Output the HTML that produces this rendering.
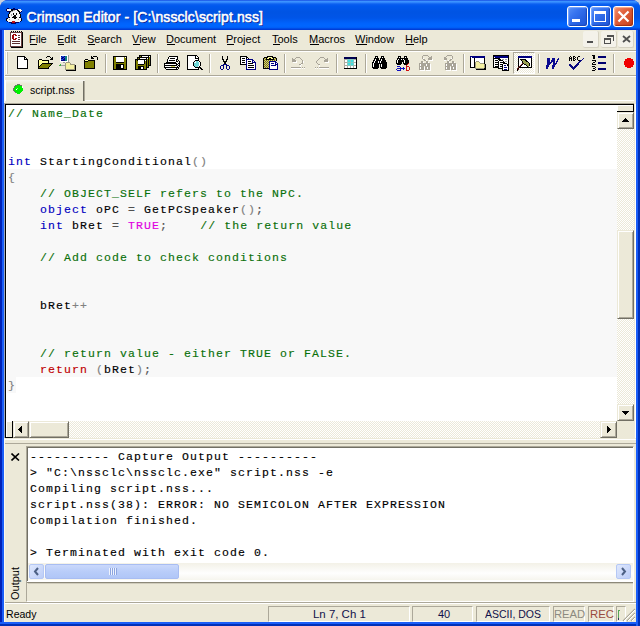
<!DOCTYPE html><html><head><meta charset="utf-8"><style>*{margin:0;padding:0;box-sizing:border-box}
html,body{width:640px;height:626px;overflow:hidden;background:#c8d0e0}
body{position:relative;font-family:"Liberation Sans",sans-serif;font-size:11px;color:#000}
.a{position:absolute}
.t{position:absolute;white-space:pre;line-height:13px;transform-origin:0 0}
.code{position:absolute;font-family:"Liberation Mono",monospace;font-size:11.5px;letter-spacing:1.1px;line-height:16px;white-space:pre;color:#000;-webkit-text-stroke:0.15px currentColor}
.kw{color:#0000c0}.cm{color:#0a700a}.mg{color:#e000e0}.rd{color:#c00000}.gy{color:#808080}.op{color:#505050}
svg{position:absolute;shape-rendering:crispEdges}
</style></head><body><div class="a" style="left:0px;top:0px;width:640px;height:626px;background:#0a3fd8;border-radius:8px 8px 0 0"></div><div class="a" style="left:0px;top:0px;width:640px;height:30px;background:linear-gradient(180deg,#0831d9 0px,#3d95ff 1px,#3a90ff 2px,#0d60f0 4px,#0058ee 6px,#0054e3 12px,#0055e8 18px,#0062fb 23px,#0066ff 26px,#005cf5 28px,#003dd7 29px,#003dd7 30px);border-radius:8px 8px 0 0"></div><div class="a" style="left:0px;top:30px;width:4px;height:596px;background:linear-gradient(90deg,#0022b8 0,#0022b8 2px,#1a5ef8 2px,#1a5ef8 4px);"></div><div class="a" style="left:636px;top:30px;width:4px;height:596px;background:linear-gradient(90deg,#1a5ef8 0,#1a5ef8 2px,#0030b8 2px,#0030b8 4px);"></div><div class="a" style="left:0px;top:622px;width:640px;height:4px;background:linear-gradient(180deg,#1a5ef8 0,#1a5ef8 2px,#0030b8 2px,#0030b8 4px);"></div><div class="a" style="left:4px;top:30px;width:632px;height:592px;background:#ece9d8;"></div><div class="t" style="left:26.5px;top:9px;font-size:14px;color:#fff;line-height:17px;-webkit-text-stroke:0.55px #fff;letter-spacing:0.1px;text-shadow:1px 1px 0 #0a1e8c;">Crimson Editor - [C:\nssclc\script.nss]</div><div class="a" style="left:4px;top:50px;width:632px;height:1px;background:#aca899;"></div><div class="a" style="left:4px;top:51px;width:632px;height:1px;background:#ffffff;"></div><div class="t" style="left:29px;top:33px;font-size:11px;color:#000;">File</div><div class="a" style="left:30px;top:44px;width:7px;height:1px;background:#000;"></div><div class="t" style="left:57px;top:33px;font-size:11px;color:#000;">Edit</div><div class="a" style="left:58px;top:44px;width:6px;height:1px;background:#000;"></div><div class="t" style="left:87px;top:33px;font-size:11px;color:#000;">Search</div><div class="a" style="left:88px;top:44px;width:7px;height:1px;background:#000;"></div><div class="t" style="left:132px;top:33px;font-size:11px;color:#000;">View</div><div class="a" style="left:133px;top:44px;width:7px;height:1px;background:#000;"></div><div class="t" style="left:166px;top:33px;font-size:11px;color:#000;">Document</div><div class="a" style="left:167px;top:44px;width:8px;height:1px;background:#000;"></div><div class="t" style="left:226px;top:33px;font-size:11px;color:#000;">Project</div><div class="a" style="left:227px;top:44px;width:7px;height:1px;background:#000;"></div><div class="t" style="left:272px;top:33px;font-size:11px;color:#000;">Tools</div><div class="a" style="left:273px;top:44px;width:7px;height:1px;background:#000;"></div><div class="t" style="left:309px;top:33px;font-size:11px;color:#000;">Macros</div><div class="a" style="left:310px;top:44px;width:9px;height:1px;background:#000;"></div><div class="t" style="left:355px;top:33px;font-size:11px;color:#000;">Window</div><div class="a" style="left:356px;top:44px;width:11px;height:1px;background:#000;"></div><div class="t" style="left:405px;top:33px;font-size:11px;color:#000;">Help</div><div class="a" style="left:406px;top:44px;width:8px;height:1px;background:#000;"></div><div class="a" style="left:583px;top:31px;width:16px;height:17px;background:#f4f2ea;border-right:1px solid #d6d2c2;border-bottom:1px solid #d6d2c2;border-radius:2px"></div><div class="a" style="left:601px;top:31px;width:16px;height:17px;background:#f4f2ea;border-right:1px solid #d6d2c2;border-bottom:1px solid #d6d2c2;border-radius:2px"></div><div class="a" style="left:618px;top:31px;width:16px;height:17px;background:#f4f2ea;border-right:1px solid #d6d2c2;border-bottom:1px solid #d6d2c2;border-radius:2px"></div><div class="a" style="left:587px;top:41px;width:6px;height:2px;background:#505050;"></div><svg style="left:604px;top:35px" width="10" height="9"><path d="M3 0h7v6h-1v-4h-6z" fill="#505050"/><path d="M0 3h7v6h-7z M1 5h5v3h-5z" fill="#505050" fill-rule="evenodd"/></svg><svg style="left:622px;top:35px" width="9" height="8"><path d="M1 1L8 7M8 1L1 7" stroke="#505050" stroke-width="1.8" fill="none" style="shape-rendering:auto"/></svg><div class="a" style="left:4px;top:75px;width:632px;height:1px;background:#aca899;"></div><div class="a" style="left:4px;top:76px;width:632px;height:1px;background:#ffffff;"></div><div class="a" style="left:6px;top:52px;width:2px;height:22px;background:#fff;border-right:1px solid #c7c3b3"></div><div class="a" style="left:105px;top:54px;width:1px;height:19px;background:#aca899;box-shadow:1px 0 0 #fff"></div><div class="a" style="left:157px;top:54px;width:1px;height:19px;background:#aca899;box-shadow:1px 0 0 #fff"></div><div class="a" style="left:209px;top:54px;width:1px;height:19px;background:#aca899;box-shadow:1px 0 0 #fff"></div><div class="a" style="left:284px;top:54px;width:1px;height:19px;background:#aca899;box-shadow:1px 0 0 #fff"></div><div class="a" style="left:336px;top:54px;width:1px;height:19px;background:#aca899;box-shadow:1px 0 0 #fff"></div><div class="a" style="left:365px;top:54px;width:1px;height:19px;background:#aca899;box-shadow:1px 0 0 #fff"></div><div class="a" style="left:463px;top:54px;width:1px;height:19px;background:#aca899;box-shadow:1px 0 0 #fff"></div><div class="a" style="left:538px;top:54px;width:1px;height:19px;background:#aca899;box-shadow:1px 0 0 #fff"></div><div class="a" style="left:613px;top:54px;width:1px;height:19px;background:#aca899;box-shadow:1px 0 0 #fff"></div><div class="a" style="left:5px;top:80px;width:80px;height:21px;background:linear-gradient(180deg,#f6f5ef,#ece9d8 4px);border-left:1px solid #fff"></div><div class="a" style="left:83px;top:81px;width:1px;height:20px;background:#716f64;"></div><div class="a" style="left:84px;top:81px;width:1px;height:20px;background:#aca899;"></div><div class="a" style="left:85px;top:100px;width:549px;height:1px;background:#fff;"></div><div class="t" style="left:30px;top:84px;font-size:11px;color:#000;transform:scaleX(0.96);">script.nss</div><div class="a" style="left:4px;top:104px;width:632px;height:334px;background:#ece9d8;"></div><div class="a" style="left:4px;top:103px;width:630px;height:335px;background:#fff;border-top:1px solid #aca899;border-left:1px solid #9aa8c0"></div><div class="a" style="left:5px;top:104px;width:629px;height:334px;background:#fff;border-top:1px solid #000;border-left:1px solid #000"></div><div class="a" style="left:7px;top:169px;width:610px;height:208px;background:#f8f8f8;"></div><div class="a" style="left:7px;top:377px;width:9px;height:16px;background:#f8f8f8;"></div><div class="code" style="left:8px;top:106px"><span class="cm">// Name_Date</span>


<span class="kw">int</span> StartingConditional<span class="gy">()</span>
<span class="gy">{</span>
    <span class="cm">// OBJECT_SELF refers to the NPC.</span>
    <span class="kw">object</span> oPC <span class="op">=</span> GetPCSpeaker<span class="gy">()</span><span class="op">;</span>
    <span class="kw">int</span> bRet <span class="op">=</span> <span class="mg">TRUE</span><span class="op">;</span>    <span class="cm">// the return value</span>

    <span class="cm">// Add code to check conditions</span>


    bRet<span class="gy">++</span>


    <span class="cm">// return value - either TRUE or FALSE.</span>
    <span class="rd">return</span> <span class="gy">(</span>bRet<span class="gy">)</span><span class="op">;</span>
<span class="gy">}</span></div><div class="a" style="left:617px;top:105px;width:17px;height:316px;background:repeating-conic-gradient(#ece9d8 0 25%, #ffffff 0 50%) 0 0/2px 2px;"></div><div class="a" style="left:617px;top:105px;width:17px;height:7px;background:#ece9d8;border-right:1px solid #000;border-bottom:1px solid #000;box-shadow:inset 1px 1px 0 #fff"></div><div class="a" style="left:617px;top:112px;width:17px;height:17px;background:#ece9d8;border-top:1px solid #ece9d8;border-left:1px solid #ece9d8;border-right:1px solid #716f64;border-bottom:1px solid #716f64;box-shadow:inset 1px 1px 0 #fff, inset -1px -1px 0 #aca899"></div><svg style="left:622px;top:118px" width="7" height="4"><path d="M3 0h1v1h1v1h1v1h1v1H0V3h1V2h1V1h1z" fill="#000"/></svg><div class="a" style="left:617px;top:230px;width:17px;height:89px;background:#ece9d8;border-top:1px solid #ece9d8;border-left:1px solid #ece9d8;border-right:1px solid #716f64;border-bottom:1px solid #716f64;box-shadow:inset 1px 1px 0 #fff, inset -1px -1px 0 #aca899"></div><div class="a" style="left:617px;top:404px;width:17px;height:17px;background:#ece9d8;border-top:1px solid #ece9d8;border-left:1px solid #ece9d8;border-right:1px solid #716f64;border-bottom:1px solid #716f64;box-shadow:inset 1px 1px 0 #fff, inset -1px -1px 0 #aca899"></div><svg style="left:622px;top:411px" width="7" height="4"><path d="M0 0h7v1h-1v1h-1v1h-1v1h-1v-1h-1v-1h-1v-1h-1z" fill="#000"/></svg><div class="a" style="left:5px;top:421px;width:612px;height:17px;background:repeating-conic-gradient(#ece9d8 0 25%, #ffffff 0 50%) 0 0/2px 2px;"></div><div class="a" style="left:5px;top:421px;width:8px;height:17px;background:#ece9d8;border-left:1px solid #000;border-right:1px solid #000;border-bottom:1px solid #000;box-shadow:inset 1px 1px 0 #fff"></div><div class="a" style="left:13px;top:421px;width:16px;height:17px;background:#ece9d8;border-top:1px solid #ece9d8;border-left:1px solid #ece9d8;border-right:1px solid #716f64;border-bottom:1px solid #716f64;box-shadow:inset 1px 1px 0 #fff, inset -1px -1px 0 #aca899"></div><svg style="left:18px;top:426px" width="4" height="7"><path d="M3 0h1v7h-1v-1h-1v-1h-1v-1h-1v-1h1v-1h1v-1h1z" fill="#000"/></svg><div class="a" style="left:29px;top:421px;width:40px;height:17px;background:#ece9d8;border-top:1px solid #ece9d8;border-left:1px solid #ece9d8;border-right:1px solid #716f64;border-bottom:1px solid #716f64;box-shadow:inset 1px 1px 0 #fff, inset -1px -1px 0 #aca899"></div><div class="a" style="left:600px;top:421px;width:17px;height:17px;background:#ece9d8;border-top:1px solid #ece9d8;border-left:1px solid #ece9d8;border-right:1px solid #716f64;border-bottom:1px solid #716f64;box-shadow:inset 1px 1px 0 #fff, inset -1px -1px 0 #aca899"></div><svg style="left:607px;top:426px" width="4" height="7"><path d="M0 0h1v1h1v1h1v1h1v1h-1v1h-1v1h-1v1h-1z" fill="#000"/></svg><div class="a" style="left:617px;top:421px;width:17px;height:17px;background:#ece9d8;"></div><div class="a" style="left:634px;top:104px;width:2px;height:334px;background:#ece9d8;border-right:1px solid #fff"></div><div class="a" style="left:4px;top:438px;width:632px;height:8px;background:#ece9d8;"></div><div class="a" style="left:4px;top:439px;width:632px;height:1px;background:#fff;"></div><div class="a" style="left:4px;top:443px;width:632px;height:1px;background:#aca899;"></div><div class="a" style="left:26px;top:446px;width:608px;height:156px;background:#ece9d8;border-top:1px solid #aca899;border-left:1px solid #aca899;border-right:1px solid #fff;border-bottom:1px solid #fff"></div><div class="a" style="left:27px;top:447px;width:606px;height:136px;background:#fff;border-top:1px solid #716f64;border-left:1px solid #716f64"></div><svg style="left:11px;top:453px" width="9" height="8"><path d="M0.5 0.5L8 7.5M8 0.5L0.5 7.5" stroke="#000" stroke-width="1.6" fill="none" style="shape-rendering:auto"/></svg><div class="t" style="left:9px;top:600px;font-size:11px;transform:rotate(-90deg);transform-origin:0 0">Output</div><div class="code" style="left:30px;top:449px">---------- Capture Output ----------
> "C:\nssclc\nssclc.exe" script.nss -e
Compiling script.nss...
script.nss(38): ERROR: NO SEMICOLON AFTER EXPRESSION
Compilation finished.

> Terminated with exit code 0.</div><div class="a" style="left:28px;top:563px;width:605px;height:17px;background:linear-gradient(180deg,#f3f1e7,#fefefe 60%,#f6f5ee);"></div><div class="a" style="left:29px;top:564px;width:15px;height:15px;background:linear-gradient(135deg,#dfe8fd,#bccdf7);border:1px solid #b5c8f5;border-radius:2px"></div><svg style="left:33px;top:567px" width="7" height="9"><path d="M5 1L2 4.5L5 8" stroke="#4d6185" stroke-width="2" fill="none" style="shape-rendering:auto"/></svg><div class="a" style="left:45px;top:564px;width:134px;height:15px;background:linear-gradient(180deg,#cad8fb,#b9cdf9 50%,#b0c6f7);border:1px solid #a8bdf2;border-radius:2px"></div><div class="a" style="left:109px;top:568px;width:1px;height:7px;background:#eef3fe;box-shadow:1px 0 0 #8ca5e0"></div><div class="a" style="left:111px;top:568px;width:1px;height:7px;background:#eef3fe;box-shadow:1px 0 0 #8ca5e0"></div><div class="a" style="left:113px;top:568px;width:1px;height:7px;background:#eef3fe;box-shadow:1px 0 0 #8ca5e0"></div><div class="a" style="left:115px;top:568px;width:1px;height:7px;background:#eef3fe;box-shadow:1px 0 0 #8ca5e0"></div><div class="a" style="left:616px;top:564px;width:15px;height:15px;background:linear-gradient(135deg,#dfe8fd,#bccdf7);border:1px solid #b5c8f5;border-radius:2px"></div><svg style="left:620px;top:567px" width="7" height="9"><path d="M2 1L5 4.5L2 8" stroke="#4d6185" stroke-width="2" fill="none" style="shape-rendering:auto"/></svg><div class="a" style="left:27px;top:581px;width:606px;height:1px;background:#fff;"></div><div class="a" style="left:27px;top:582px;width:606px;height:1px;background:#8c8878;"></div><div class="a" style="left:28px;top:583px;width:605px;height:1px;background:#d0ccbc;"></div><div class="a" style="left:4px;top:602px;width:632px;height:1px;background:#aca899;"></div><div class="a" style="left:4px;top:603px;width:632px;height:1px;background:#fff;"></div><div class="t" style="left:5.5px;top:608px;font-size:11px;color:#000;transform:scaleX(0.96);">Ready</div><div class="a" style="left:268px;top:606px;width:142px;height:16px;background:transparent;border-top:1px solid #aca899;border-left:1px solid #aca899;border-right:1px solid #fff;border-bottom:1px solid #fff"></div><div class="a" style="left:412px;top:606px;width:61px;height:16px;background:transparent;border-top:1px solid #aca899;border-left:1px solid #aca899;border-right:1px solid #fff;border-bottom:1px solid #fff"></div><div class="a" style="left:476px;top:606px;width:74px;height:16px;background:transparent;border-top:1px solid #aca899;border-left:1px solid #aca899;border-right:1px solid #fff;border-bottom:1px solid #fff"></div><div class="a" style="left:553px;top:606px;width:32px;height:16px;background:transparent;border-top:1px solid #aca899;border-left:1px solid #aca899;border-right:1px solid #fff;border-bottom:1px solid #fff"></div><div class="a" style="left:588px;top:606px;width:26px;height:16px;background:transparent;border-top:1px solid #aca899;border-left:1px solid #aca899;border-right:1px solid #fff;border-bottom:1px solid #fff"></div><div class="a" style="left:616px;top:606px;width:10px;height:16px;background:transparent;border-top:1px solid #aca899;border-left:1px solid #aca899;border-right:1px solid #fff;border-bottom:1px solid #fff"></div><div class="t" style="left:312.5px;top:608px;font-size:11px;color:#10104a;transform:scaleX(1.04);">Ln 7, Ch 1</div><div class="t" style="left:438px;top:608px;font-size:11px;color:#10104a;">40</div><div class="t" style="left:485px;top:608px;font-size:11px;color:#10104a;transform:scaleX(0.955);">ASCII, DOS</div><div class="t" style="left:554px;top:608px;font-size:11px;color:#8c8a80;transform:scaleX(1.02);">READ</div><div class="t" style="left:589.5px;top:608px;font-size:11px;color:#9a4a40;transform:scaleX(1.03);">REC</div><svg style="left:622px;top:608px" width="14" height="14"><path d="M13 1L1 13M13 5L5 13M13 9L9 13" stroke="#aca899" stroke-width="1.2" style="shape-rendering:auto"/><path d="M13 2L2 13M13 6L6 13M13 10L10 13" stroke="#fff" stroke-width="1" style="shape-rendering:auto"/></svg><svg style="left:6px;top:8px" width="16" height="16"><rect x="1" y="0" width="2" height="1" fill="#000060"/><rect x="7" y="0" width="2" height="1" fill="#000060"/><rect x="0" y="1" width="1" height="1" fill="#000060"/><rect x="1" y="1" width="4" height="1" fill="#f4f4f4"/><rect x="5" y="1" width="2" height="1" fill="#000000"/><rect x="7" y="1" width="5" height="1" fill="#000060"/><rect x="12" y="1" width="3" height="1" fill="#f4f4f4"/><rect x="0" y="2" width="1" height="1" fill="#000060"/><rect x="1" y="2" width="4" height="1" fill="#f4f4f4"/><rect x="5" y="2" width="2" height="1" fill="#000000"/><rect x="7" y="2" width="2" height="1" fill="#a0a0a0"/><rect x="9" y="2" width="2" height="1" fill="#f4f4f4"/><rect x="11" y="2" width="2" height="1" fill="#000000"/><rect x="13" y="2" width="3" height="1" fill="#f4f4f4"/><rect x="1" y="3" width="3" height="1" fill="#000060"/><rect x="4" y="3" width="1" height="1" fill="#000000"/><rect x="5" y="3" width="2" height="1" fill="#a0a0a0"/><rect x="7" y="3" width="5" height="1" fill="#f4f4f4"/><rect x="12" y="3" width="2" height="1" fill="#000000"/><rect x="14" y="3" width="1" height="1" fill="#f4f4f4"/><rect x="15" y="3" width="1" height="1" fill="#000060"/><rect x="3" y="4" width="1" height="1" fill="#000000"/><rect x="4" y="4" width="1" height="1" fill="#a0a0a0"/><rect x="5" y="4" width="8" height="1" fill="#f4f4f4"/><rect x="13" y="4" width="1" height="1" fill="#000000"/><rect x="14" y="4" width="1" height="1" fill="#000060"/><rect x="3" y="5" width="1" height="1" fill="#000000"/><rect x="4" y="5" width="3" height="1" fill="#f4f4f4"/><rect x="7" y="5" width="1" height="1" fill="#000000"/><rect x="8" y="5" width="2" height="1" fill="#f4f4f4"/><rect x="10" y="5" width="1" height="1" fill="#000000"/><rect x="11" y="5" width="2" height="1" fill="#f4f4f4"/><rect x="13" y="5" width="1" height="1" fill="#000000"/><rect x="2" y="6" width="1" height="1" fill="#000000"/><rect x="3" y="6" width="2" height="1" fill="#f4f4f4"/><rect x="5" y="6" width="1" height="1" fill="#a0a0a0"/><rect x="6" y="6" width="1" height="1" fill="#f4f4f4"/><rect x="7" y="6" width="1" height="1" fill="#000000"/><rect x="8" y="6" width="2" height="1" fill="#f4f4f4"/><rect x="10" y="6" width="1" height="1" fill="#000000"/><rect x="11" y="6" width="3" height="1" fill="#f4f4f4"/><rect x="14" y="6" width="1" height="1" fill="#000000"/><rect x="2" y="7" width="1" height="1" fill="#000000"/><rect x="3" y="7" width="2" height="1" fill="#f4f4f4"/><rect x="5" y="7" width="1" height="1" fill="#a0a0a0"/><rect x="6" y="7" width="2" height="1" fill="#f4f4f4"/><rect x="8" y="7" width="2" height="1" fill="#000000"/><rect x="10" y="7" width="4" height="1" fill="#f4f4f4"/><rect x="14" y="7" width="1" height="1" fill="#000000"/><rect x="2" y="8" width="1" height="1" fill="#000000"/><rect x="3" y="8" width="4" height="1" fill="#f4f4f4"/><rect x="7" y="8" width="3" height="1" fill="#000000"/><rect x="10" y="8" width="4" height="1" fill="#f4f4f4"/><rect x="14" y="8" width="1" height="1" fill="#000000"/><rect x="2" y="9" width="1" height="1" fill="#000060"/><rect x="3" y="9" width="1" height="1" fill="#000000"/><rect x="4" y="9" width="2" height="1" fill="#f4f4f4"/><rect x="6" y="9" width="5" height="1" fill="#000000"/><rect x="11" y="9" width="2" height="1" fill="#f4f4f4"/><rect x="13" y="9" width="2" height="1" fill="#000000"/><rect x="0" y="10" width="1" height="1" fill="#000060"/><rect x="1" y="10" width="1" height="1" fill="#000000"/><rect x="2" y="10" width="6" height="1" fill="#f4f4f4"/><rect x="8" y="10" width="2" height="1" fill="#000000"/><rect x="10" y="10" width="5" height="1" fill="#f4f4f4"/><rect x="15" y="10" width="1" height="1" fill="#000060"/><rect x="0" y="11" width="1" height="1" fill="#000000"/><rect x="1" y="11" width="2" height="1" fill="#f4f4f4"/><rect x="3" y="11" width="1" height="1" fill="#a0a0a0"/><rect x="4" y="11" width="8" height="1" fill="#f4f4f4"/><rect x="12" y="11" width="1" height="1" fill="#a0a0a0"/><rect x="13" y="11" width="2" height="1" fill="#f4f4f4"/><rect x="15" y="11" width="1" height="1" fill="#000000"/><rect x="0" y="12" width="1" height="1" fill="#000000"/><rect x="1" y="12" width="14" height="1" fill="#f4f4f4"/><rect x="15" y="12" width="1" height="1" fill="#000000"/><rect x="1" y="13" width="1" height="1" fill="#000060"/><rect x="2" y="13" width="4" height="1" fill="#f4f4f4"/><rect x="6" y="13" width="3" height="1" fill="#c01010"/><rect x="9" y="13" width="5" height="1" fill="#f4f4f4"/><rect x="14" y="13" width="1" height="1" fill="#000060"/><rect x="3" y="14" width="3" height="1" fill="#000060"/><rect x="6" y="14" width="3" height="1" fill="#c01010"/><rect x="9" y="14" width="4" height="1" fill="#000060"/><rect x="5" y="15" width="5" height="1" fill="#000060"/></svg><svg style="left:10px;top:31px" width="13" height="17"><rect x="1" y="0" width="1" height="1" fill="#000000"/><rect x="3" y="0" width="1" height="1" fill="#000000"/><rect x="5" y="0" width="1" height="1" fill="#000000"/><rect x="7" y="0" width="1" height="1" fill="#000000"/><rect x="9" y="0" width="1" height="1" fill="#000000"/><rect x="11" y="0" width="1" height="1" fill="#000000"/><rect x="0" y="1" width="12" height="1" fill="#6a4040"/><rect x="12" y="1" width="1" height="1" fill="#000000"/><rect x="0" y="2" width="1" height="1" fill="#6a4040"/><rect x="1" y="2" width="10" height="1" fill="#ffffff"/><rect x="11" y="2" width="1" height="1" fill="#6a4040"/><rect x="12" y="2" width="1" height="1" fill="#000000"/><rect x="0" y="3" width="1" height="1" fill="#6a4040"/><rect x="1" y="3" width="2" height="1" fill="#ffffff"/><rect x="3" y="3" width="3" height="1" fill="#a00808"/><rect x="6" y="3" width="5" height="1" fill="#ffffff"/><rect x="11" y="3" width="1" height="1" fill="#6a4040"/><rect x="12" y="3" width="1" height="1" fill="#000000"/><rect x="0" y="4" width="1" height="1" fill="#6a4040"/><rect x="1" y="4" width="1" height="1" fill="#ffffff"/><rect x="2" y="4" width="2" height="1" fill="#a00808"/><rect x="4" y="4" width="1" height="1" fill="#ffffff"/><rect x="5" y="4" width="2" height="1" fill="#a00808"/><rect x="7" y="4" width="1" height="1" fill="#ffffff"/><rect x="8" y="4" width="2" height="1" fill="#603030"/><rect x="10" y="4" width="1" height="1" fill="#ffffff"/><rect x="11" y="4" width="1" height="1" fill="#6a4040"/><rect x="12" y="4" width="1" height="1" fill="#000000"/><rect x="0" y="5" width="1" height="1" fill="#6a4040"/><rect x="1" y="5" width="1" height="1" fill="#ffffff"/><rect x="2" y="5" width="2" height="1" fill="#a00808"/><rect x="4" y="5" width="7" height="1" fill="#ffffff"/><rect x="11" y="5" width="1" height="1" fill="#6a4040"/><rect x="12" y="5" width="1" height="1" fill="#000000"/><rect x="0" y="6" width="1" height="1" fill="#6a4040"/><rect x="1" y="6" width="1" height="1" fill="#ffffff"/><rect x="2" y="6" width="2" height="1" fill="#a00808"/><rect x="4" y="6" width="4" height="1" fill="#ffffff"/><rect x="8" y="6" width="2" height="1" fill="#603030"/><rect x="10" y="6" width="1" height="1" fill="#ffffff"/><rect x="11" y="6" width="1" height="1" fill="#6a4040"/><rect x="12" y="6" width="1" height="1" fill="#000000"/><rect x="0" y="7" width="1" height="1" fill="#6a4040"/><rect x="1" y="7" width="1" height="1" fill="#ffffff"/><rect x="2" y="7" width="2" height="1" fill="#a00808"/><rect x="4" y="7" width="1" height="1" fill="#ffffff"/><rect x="5" y="7" width="2" height="1" fill="#a00808"/><rect x="7" y="7" width="4" height="1" fill="#ffffff"/><rect x="11" y="7" width="1" height="1" fill="#6a4040"/><rect x="12" y="7" width="1" height="1" fill="#000000"/><rect x="0" y="8" width="1" height="1" fill="#6a4040"/><rect x="1" y="8" width="2" height="1" fill="#ffffff"/><rect x="3" y="8" width="3" height="1" fill="#a00808"/><rect x="6" y="8" width="2" height="1" fill="#ffffff"/><rect x="8" y="8" width="2" height="1" fill="#603030"/><rect x="10" y="8" width="1" height="1" fill="#ffffff"/><rect x="11" y="8" width="1" height="1" fill="#6a4040"/><rect x="12" y="8" width="1" height="1" fill="#000000"/><rect x="0" y="9" width="1" height="1" fill="#6a4040"/><rect x="1" y="9" width="10" height="1" fill="#ffffff"/><rect x="11" y="9" width="1" height="1" fill="#6a4040"/><rect x="12" y="9" width="1" height="1" fill="#000000"/><rect x="0" y="10" width="1" height="1" fill="#6a4040"/><rect x="1" y="10" width="1" height="1" fill="#ffffff"/><rect x="2" y="10" width="8" height="1" fill="#603030"/><rect x="10" y="10" width="1" height="1" fill="#ffffff"/><rect x="11" y="10" width="1" height="1" fill="#6a4040"/><rect x="12" y="10" width="1" height="1" fill="#000000"/><rect x="0" y="11" width="1" height="1" fill="#6a4040"/><rect x="1" y="11" width="10" height="1" fill="#ffffff"/><rect x="11" y="11" width="1" height="1" fill="#6a4040"/><rect x="12" y="11" width="1" height="1" fill="#000000"/><rect x="0" y="12" width="1" height="1" fill="#6a4040"/><rect x="1" y="12" width="1" height="1" fill="#ffffff"/><rect x="2" y="12" width="8" height="1" fill="#603030"/><rect x="10" y="12" width="1" height="1" fill="#ffffff"/><rect x="11" y="12" width="1" height="1" fill="#6a4040"/><rect x="12" y="12" width="1" height="1" fill="#000000"/><rect x="0" y="13" width="1" height="1" fill="#6a4040"/><rect x="1" y="13" width="10" height="1" fill="#ffffff"/><rect x="11" y="13" width="1" height="1" fill="#6a4040"/><rect x="12" y="13" width="1" height="1" fill="#000000"/><rect x="0" y="14" width="1" height="1" fill="#6a4040"/><rect x="1" y="14" width="10" height="1" fill="#ffffff"/><rect x="11" y="14" width="1" height="1" fill="#6a4040"/><rect x="12" y="14" width="1" height="1" fill="#000000"/><rect x="0" y="15" width="12" height="1" fill="#6a4040"/><rect x="12" y="15" width="1" height="1" fill="#000000"/><rect x="1" y="16" width="12" height="1" fill="#000000"/></svg><svg style="left:13px;top:84px" width="10" height="10"><rect x="4" y="0" width="3" height="1" fill="#6a766a"/><rect x="2" y="1" width="2" height="1" fill="#6a766a"/><rect x="4" y="1" width="3" height="1" fill="#00f000"/><rect x="7" y="1" width="2" height="1" fill="#6a766a"/><rect x="1" y="2" width="1" height="1" fill="#6a766a"/><rect x="2" y="2" width="7" height="1" fill="#00f000"/><rect x="9" y="2" width="1" height="1" fill="#ffffff"/><rect x="1" y="3" width="1" height="1" fill="#6a766a"/><rect x="2" y="3" width="7" height="1" fill="#00f000"/><rect x="9" y="3" width="1" height="1" fill="#ffffff"/><rect x="0" y="4" width="1" height="1" fill="#6a766a"/><rect x="1" y="4" width="3" height="1" fill="#00f000"/><rect x="4" y="4" width="1" height="1" fill="#80ff80"/><rect x="5" y="4" width="5" height="1" fill="#00f000"/><rect x="0" y="5" width="1" height="1" fill="#6a766a"/><rect x="1" y="5" width="2" height="1" fill="#00f000"/><rect x="3" y="5" width="1" height="1" fill="#ffffff"/><rect x="4" y="5" width="6" height="1" fill="#00f000"/><rect x="0" y="6" width="1" height="1" fill="#6a766a"/><rect x="1" y="6" width="9" height="1" fill="#00f000"/><rect x="1" y="7" width="1" height="1" fill="#6a766a"/><rect x="2" y="7" width="7" height="1" fill="#00f000"/><rect x="2" y="8" width="1" height="1" fill="#6a766a"/><rect x="3" y="8" width="5" height="1" fill="#00f000"/><rect x="4" y="9" width="3" height="1" fill="#00f000"/></svg><svg style="left:17px;top:56px" width="11" height="13"><rect x="0" y="0" width="8" height="1" fill="#000000"/><rect x="0" y="1" width="1" height="1" fill="#000000"/><rect x="1" y="1" width="6" height="1" fill="#ffffff"/><rect x="7" y="1" width="2" height="1" fill="#000000"/><rect x="0" y="2" width="1" height="1" fill="#000000"/><rect x="1" y="2" width="6" height="1" fill="#ffffff"/><rect x="7" y="2" width="1" height="1" fill="#000000"/><rect x="8" y="2" width="1" height="1" fill="#ffffff"/><rect x="9" y="2" width="1" height="1" fill="#000000"/><rect x="0" y="3" width="1" height="1" fill="#000000"/><rect x="1" y="3" width="6" height="1" fill="#ffffff"/><rect x="7" y="3" width="4" height="1" fill="#000000"/><rect x="0" y="4" width="1" height="1" fill="#000000"/><rect x="1" y="4" width="9" height="1" fill="#ffffff"/><rect x="10" y="4" width="1" height="1" fill="#000000"/><rect x="0" y="5" width="1" height="1" fill="#000000"/><rect x="1" y="5" width="9" height="1" fill="#ffffff"/><rect x="10" y="5" width="1" height="1" fill="#000000"/><rect x="0" y="6" width="1" height="1" fill="#000000"/><rect x="1" y="6" width="9" height="1" fill="#ffffff"/><rect x="10" y="6" width="1" height="1" fill="#000000"/><rect x="0" y="7" width="1" height="1" fill="#000000"/><rect x="1" y="7" width="9" height="1" fill="#ffffff"/><rect x="10" y="7" width="1" height="1" fill="#000000"/><rect x="0" y="8" width="1" height="1" fill="#000000"/><rect x="1" y="8" width="9" height="1" fill="#ffffff"/><rect x="10" y="8" width="1" height="1" fill="#000000"/><rect x="0" y="9" width="1" height="1" fill="#000000"/><rect x="1" y="9" width="9" height="1" fill="#ffffff"/><rect x="10" y="9" width="1" height="1" fill="#000000"/><rect x="0" y="10" width="1" height="1" fill="#000000"/><rect x="1" y="10" width="9" height="1" fill="#ffffff"/><rect x="10" y="10" width="1" height="1" fill="#000000"/><rect x="0" y="11" width="1" height="1" fill="#000000"/><rect x="1" y="11" width="9" height="1" fill="#ffffff"/><rect x="10" y="11" width="1" height="1" fill="#000000"/><rect x="0" y="12" width="11" height="1" fill="#000000"/></svg><svg style="left:36px;top:53px" width="17" height="16"><rect x="11" y="3" width="3" height="1" fill="#000000"/><rect x="10" y="4" width="1" height="1" fill="#000000"/><rect x="14" y="4" width="1" height="1" fill="#000000"/><rect x="16" y="4" width="1" height="1" fill="#000000"/><rect x="15" y="5" width="2" height="1" fill="#000000"/><rect x="3" y="6" width="3" height="1" fill="#000000"/><rect x="14" y="6" width="3" height="1" fill="#000000"/><rect x="2" y="7" width="1" height="1" fill="#000000"/><rect x="3" y="7" width="3" height="1" fill="#ffff99"/><rect x="6" y="7" width="7" height="1" fill="#000000"/><rect x="2" y="8" width="1" height="1" fill="#000000"/><rect x="3" y="8" width="9" height="1" fill="#ffff99"/><rect x="12" y="8" width="1" height="1" fill="#000000"/><rect x="2" y="9" width="1" height="1" fill="#000000"/><rect x="3" y="9" width="9" height="1" fill="#ffff99"/><rect x="12" y="9" width="1" height="1" fill="#000000"/><rect x="2" y="10" width="1" height="1" fill="#000000"/><rect x="3" y="10" width="3" height="1" fill="#ffff99"/><rect x="6" y="10" width="11" height="1" fill="#000000"/><rect x="2" y="11" width="1" height="1" fill="#000000"/><rect x="3" y="11" width="2" height="1" fill="#ffff99"/><rect x="5" y="11" width="1" height="1" fill="#000000"/><rect x="6" y="11" width="9" height="1" fill="#808000"/><rect x="15" y="11" width="1" height="1" fill="#000000"/><rect x="2" y="12" width="1" height="1" fill="#000000"/><rect x="3" y="12" width="1" height="1" fill="#ffff99"/><rect x="4" y="12" width="1" height="1" fill="#000000"/><rect x="5" y="12" width="9" height="1" fill="#808000"/><rect x="14" y="12" width="1" height="1" fill="#000000"/><rect x="2" y="13" width="2" height="1" fill="#000000"/><rect x="4" y="13" width="9" height="1" fill="#808000"/><rect x="13" y="13" width="1" height="1" fill="#000000"/><rect x="2" y="14" width="1" height="1" fill="#000000"/><rect x="3" y="14" width="9" height="1" fill="#808000"/><rect x="12" y="14" width="1" height="1" fill="#000000"/><rect x="2" y="15" width="11" height="1" fill="#000000"/></svg><svg style="left:58px;top:53px" width="18" height="18"><rect x="2" y="2" width="8" height="1" fill="#ffffff"/><rect x="10" y="2" width="1" height="1" fill="#a0a0a0"/><rect x="2" y="3" width="1" height="1" fill="#ffffff"/><rect x="3" y="3" width="1" height="1" fill="#000080"/><rect x="4" y="3" width="2" height="1" fill="#2050e0"/><rect x="6" y="3" width="1" height="1" fill="#000080"/><rect x="7" y="3" width="2" height="1" fill="#108080"/><rect x="9" y="3" width="1" height="1" fill="#ffffff"/><rect x="10" y="3" width="1" height="1" fill="#a0a0a0"/><rect x="2" y="4" width="1" height="1" fill="#ffffff"/><rect x="3" y="4" width="1" height="1" fill="#2050e0"/><rect x="4" y="4" width="2" height="1" fill="#000080"/><rect x="6" y="4" width="1" height="1" fill="#2050e0"/><rect x="7" y="4" width="2" height="1" fill="#108080"/><rect x="9" y="4" width="1" height="1" fill="#ffffff"/><rect x="10" y="4" width="1" height="1" fill="#a0a0a0"/><rect x="2" y="5" width="1" height="1" fill="#ffffff"/><rect x="3" y="5" width="2" height="1" fill="#000080"/><rect x="5" y="5" width="1" height="1" fill="#2050e0"/><rect x="6" y="5" width="1" height="1" fill="#000080"/><rect x="7" y="5" width="2" height="1" fill="#108080"/><rect x="9" y="5" width="1" height="1" fill="#ffffff"/><rect x="10" y="5" width="1" height="1" fill="#a0a0a0"/><rect x="2" y="6" width="1" height="1" fill="#ffffff"/><rect x="3" y="6" width="2" height="1" fill="#2050e0"/><rect x="5" y="6" width="2" height="1" fill="#000080"/><rect x="7" y="6" width="2" height="1" fill="#108080"/><rect x="9" y="6" width="1" height="1" fill="#ffffff"/><rect x="10" y="6" width="1" height="1" fill="#a0a0a0"/><rect x="2" y="7" width="1" height="1" fill="#ffffff"/><rect x="3" y="7" width="4" height="1" fill="#000080"/><rect x="7" y="7" width="2" height="1" fill="#108080"/><rect x="9" y="7" width="1" height="1" fill="#ffffff"/><rect x="10" y="7" width="1" height="1" fill="#a0a0a0"/><rect x="2" y="8" width="8" height="1" fill="#ffffff"/><rect x="10" y="8" width="1" height="1" fill="#a0a0a0"/><rect x="5" y="9" width="2" height="1" fill="#a0a0a0"/><rect x="8" y="9" width="4" height="1" fill="#a09c80"/><rect x="7" y="10" width="1" height="1" fill="#a09c80"/><rect x="8" y="10" width="4" height="1" fill="#f4f0a0"/><rect x="12" y="10" width="1" height="1" fill="#a09c80"/><rect x="2" y="11" width="1" height="1" fill="#40b040"/><rect x="7" y="11" width="1" height="1" fill="#a09c80"/><rect x="8" y="11" width="4" height="1" fill="#f4f0a0"/><rect x="12" y="11" width="5" height="1" fill="#a09c80"/><rect x="1" y="12" width="2" height="1" fill="#40b040"/><rect x="3" y="12" width="4" height="1" fill="#a0a0a0"/><rect x="7" y="12" width="1" height="1" fill="#a09c80"/><rect x="8" y="12" width="8" height="1" fill="#f4f0a0"/><rect x="16" y="12" width="1" height="1" fill="#a09c80"/><rect x="17" y="12" width="1" height="1" fill="#000000"/><rect x="7" y="13" width="1" height="1" fill="#a09c80"/><rect x="8" y="13" width="8" height="1" fill="#f4f0a0"/><rect x="16" y="13" width="1" height="1" fill="#a09c80"/><rect x="17" y="13" width="1" height="1" fill="#000000"/><rect x="7" y="14" width="1" height="1" fill="#a09c80"/><rect x="8" y="14" width="8" height="1" fill="#f4f0a0"/><rect x="16" y="14" width="1" height="1" fill="#a09c80"/><rect x="17" y="14" width="1" height="1" fill="#000000"/><rect x="7" y="15" width="1" height="1" fill="#a09c80"/><rect x="8" y="15" width="8" height="1" fill="#f4f0a0"/><rect x="16" y="15" width="1" height="1" fill="#a09c80"/><rect x="17" y="15" width="1" height="1" fill="#000000"/><rect x="7" y="16" width="10" height="1" fill="#a09c80"/><rect x="17" y="16" width="1" height="1" fill="#000000"/><rect x="8" y="17" width="10" height="1" fill="#000000"/></svg><svg style="left:81px;top:53px" width="17" height="16"><rect x="10" y="3" width="1" height="1" fill="#000000"/><rect x="12" y="3" width="4" height="1" fill="#000000"/><rect x="10" y="4" width="2" height="1" fill="#000000"/><rect x="16" y="4" width="1" height="1" fill="#000000"/><rect x="10" y="5" width="3" height="1" fill="#000000"/><rect x="16" y="5" width="1" height="1" fill="#000000"/><rect x="4" y="6" width="3" height="1" fill="#000000"/><rect x="16" y="6" width="1" height="1" fill="#000000"/><rect x="3" y="7" width="1" height="1" fill="#000000"/><rect x="4" y="7" width="3" height="1" fill="#ffff99"/><rect x="7" y="7" width="7" height="1" fill="#000000"/><rect x="3" y="8" width="4" height="1" fill="#000000"/><rect x="7" y="8" width="6" height="1" fill="#808000"/><rect x="13" y="8" width="1" height="1" fill="#000000"/><rect x="3" y="9" width="1" height="1" fill="#000000"/><rect x="4" y="9" width="9" height="1" fill="#808000"/><rect x="13" y="9" width="1" height="1" fill="#000000"/><rect x="3" y="10" width="1" height="1" fill="#000000"/><rect x="4" y="10" width="9" height="1" fill="#808000"/><rect x="13" y="10" width="1" height="1" fill="#000000"/><rect x="3" y="11" width="1" height="1" fill="#000000"/><rect x="4" y="11" width="9" height="1" fill="#808000"/><rect x="13" y="11" width="1" height="1" fill="#000000"/><rect x="3" y="12" width="1" height="1" fill="#000000"/><rect x="4" y="12" width="9" height="1" fill="#808000"/><rect x="13" y="12" width="1" height="1" fill="#000000"/><rect x="3" y="13" width="1" height="1" fill="#000000"/><rect x="4" y="13" width="9" height="1" fill="#808000"/><rect x="13" y="13" width="1" height="1" fill="#000000"/><rect x="3" y="14" width="1" height="1" fill="#000000"/><rect x="4" y="14" width="9" height="1" fill="#808000"/><rect x="13" y="14" width="1" height="1" fill="#000000"/><rect x="3" y="15" width="11" height="1" fill="#000000"/></svg><svg style="left:113px;top:56px" width="14" height="14"><rect x="0" y="0" width="14" height="1" fill="#000000"/><rect x="0" y="1" width="1" height="1" fill="#000000"/><rect x="1" y="1" width="2" height="1" fill="#808000"/><rect x="3" y="1" width="8" height="1" fill="#ffffff"/><rect x="11" y="1" width="1" height="1" fill="#808000"/><rect x="12" y="1" width="1" height="1" fill="#ffffff"/><rect x="13" y="1" width="1" height="1" fill="#000000"/><rect x="0" y="2" width="1" height="1" fill="#000000"/><rect x="1" y="2" width="2" height="1" fill="#808000"/><rect x="3" y="2" width="8" height="1" fill="#ffffff"/><rect x="11" y="2" width="2" height="1" fill="#808000"/><rect x="13" y="2" width="1" height="1" fill="#000000"/><rect x="0" y="3" width="1" height="1" fill="#000000"/><rect x="1" y="3" width="2" height="1" fill="#808000"/><rect x="3" y="3" width="8" height="1" fill="#ffffff"/><rect x="11" y="3" width="2" height="1" fill="#808000"/><rect x="13" y="3" width="1" height="1" fill="#000000"/><rect x="0" y="4" width="1" height="1" fill="#000000"/><rect x="1" y="4" width="2" height="1" fill="#808000"/><rect x="3" y="4" width="8" height="1" fill="#ffffff"/><rect x="11" y="4" width="2" height="1" fill="#808000"/><rect x="13" y="4" width="1" height="1" fill="#000000"/><rect x="0" y="5" width="1" height="1" fill="#000000"/><rect x="1" y="5" width="2" height="1" fill="#808000"/><rect x="3" y="5" width="8" height="1" fill="#ffffff"/><rect x="11" y="5" width="2" height="1" fill="#808000"/><rect x="13" y="5" width="1" height="1" fill="#000000"/><rect x="0" y="6" width="1" height="1" fill="#000000"/><rect x="1" y="6" width="2" height="1" fill="#808000"/><rect x="3" y="6" width="8" height="1" fill="#000000"/><rect x="11" y="6" width="2" height="1" fill="#808000"/><rect x="13" y="6" width="1" height="1" fill="#000000"/><rect x="0" y="7" width="1" height="1" fill="#000000"/><rect x="1" y="7" width="12" height="1" fill="#808000"/><rect x="13" y="7" width="1" height="1" fill="#000000"/><rect x="0" y="8" width="1" height="1" fill="#000000"/><rect x="1" y="8" width="2" height="1" fill="#808000"/><rect x="3" y="8" width="8" height="1" fill="#000000"/><rect x="11" y="8" width="2" height="1" fill="#808000"/><rect x="13" y="8" width="1" height="1" fill="#000000"/><rect x="0" y="9" width="1" height="1" fill="#000000"/><rect x="1" y="9" width="2" height="1" fill="#808000"/><rect x="3" y="9" width="5" height="1" fill="#000000"/><rect x="8" y="9" width="2" height="1" fill="#ffffff"/><rect x="10" y="9" width="1" height="1" fill="#000000"/><rect x="11" y="9" width="2" height="1" fill="#808000"/><rect x="13" y="9" width="1" height="1" fill="#000000"/><rect x="0" y="10" width="1" height="1" fill="#000000"/><rect x="1" y="10" width="2" height="1" fill="#808000"/><rect x="3" y="10" width="5" height="1" fill="#000000"/><rect x="8" y="10" width="2" height="1" fill="#ffffff"/><rect x="10" y="10" width="1" height="1" fill="#000000"/><rect x="11" y="10" width="2" height="1" fill="#808000"/><rect x="13" y="10" width="1" height="1" fill="#000000"/><rect x="0" y="11" width="1" height="1" fill="#000000"/><rect x="1" y="11" width="2" height="1" fill="#808000"/><rect x="3" y="11" width="5" height="1" fill="#000000"/><rect x="8" y="11" width="2" height="1" fill="#ffffff"/><rect x="10" y="11" width="1" height="1" fill="#000000"/><rect x="11" y="11" width="2" height="1" fill="#808000"/><rect x="13" y="11" width="1" height="1" fill="#000000"/><rect x="0" y="12" width="1" height="1" fill="#000000"/><rect x="1" y="12" width="2" height="1" fill="#808000"/><rect x="3" y="12" width="8" height="1" fill="#000000"/><rect x="11" y="12" width="2" height="1" fill="#808000"/><rect x="13" y="12" width="1" height="1" fill="#000000"/><rect x="0" y="13" width="14" height="1" fill="#000000"/></svg><svg style="left:139px;top:55px" width="12" height="11"><rect x="0" y="0" width="12" height="1" fill="#000000"/><rect x="0" y="1" width="1" height="1" fill="#000000"/><rect x="1" y="1" width="1" height="1" fill="#808000"/><rect x="2" y="1" width="1" height="1" fill="#000000"/><rect x="3" y="1" width="6" height="1" fill="#ffffff"/><rect x="9" y="1" width="1" height="1" fill="#000000"/><rect x="10" y="1" width="1" height="1" fill="#ffffff"/><rect x="11" y="1" width="1" height="1" fill="#000000"/><rect x="0" y="2" width="1" height="1" fill="#000000"/><rect x="1" y="2" width="2" height="1" fill="#808000"/><rect x="3" y="2" width="6" height="1" fill="#ffffff"/><rect x="9" y="2" width="1" height="1" fill="#000000"/><rect x="10" y="2" width="1" height="1" fill="#808000"/><rect x="11" y="2" width="1" height="1" fill="#000000"/><rect x="0" y="3" width="1" height="1" fill="#000000"/><rect x="1" y="3" width="2" height="1" fill="#808000"/><rect x="3" y="3" width="6" height="1" fill="#ffffff"/><rect x="9" y="3" width="1" height="1" fill="#000000"/><rect x="10" y="3" width="1" height="1" fill="#808000"/><rect x="11" y="3" width="1" height="1" fill="#000000"/><rect x="0" y="4" width="1" height="1" fill="#000000"/><rect x="1" y="4" width="2" height="1" fill="#808000"/><rect x="3" y="4" width="6" height="1" fill="#ffffff"/><rect x="9" y="4" width="1" height="1" fill="#000000"/><rect x="10" y="4" width="1" height="1" fill="#808000"/><rect x="11" y="4" width="1" height="1" fill="#000000"/><rect x="0" y="5" width="1" height="1" fill="#000000"/><rect x="1" y="5" width="2" height="1" fill="#808000"/><rect x="3" y="5" width="6" height="1" fill="#000000"/><rect x="9" y="5" width="2" height="1" fill="#808000"/><rect x="11" y="5" width="1" height="1" fill="#000000"/><rect x="0" y="6" width="1" height="1" fill="#000000"/><rect x="1" y="6" width="10" height="1" fill="#808000"/><rect x="11" y="6" width="1" height="1" fill="#000000"/><rect x="0" y="7" width="1" height="1" fill="#000000"/><rect x="1" y="7" width="2" height="1" fill="#808000"/><rect x="3" y="7" width="6" height="1" fill="#000000"/><rect x="9" y="7" width="2" height="1" fill="#808000"/><rect x="11" y="7" width="1" height="1" fill="#000000"/><rect x="0" y="8" width="1" height="1" fill="#000000"/><rect x="1" y="8" width="2" height="1" fill="#808000"/><rect x="3" y="8" width="3" height="1" fill="#000000"/><rect x="6" y="8" width="2" height="1" fill="#ffffff"/><rect x="8" y="8" width="1" height="1" fill="#000000"/><rect x="9" y="8" width="2" height="1" fill="#808000"/><rect x="11" y="8" width="1" height="1" fill="#000000"/><rect x="0" y="9" width="1" height="1" fill="#000000"/><rect x="1" y="9" width="2" height="1" fill="#808000"/><rect x="3" y="9" width="3" height="1" fill="#000000"/><rect x="6" y="9" width="2" height="1" fill="#ffffff"/><rect x="8" y="9" width="1" height="1" fill="#000000"/><rect x="9" y="9" width="2" height="1" fill="#808000"/><rect x="11" y="9" width="1" height="1" fill="#000000"/><rect x="0" y="10" width="12" height="1" fill="#000000"/></svg><svg style="left:137px;top:57px" width="12" height="11"><rect x="0" y="0" width="12" height="1" fill="#000000"/><rect x="0" y="1" width="1" height="1" fill="#000000"/><rect x="1" y="1" width="1" height="1" fill="#808000"/><rect x="2" y="1" width="1" height="1" fill="#000000"/><rect x="3" y="1" width="6" height="1" fill="#ffffff"/><rect x="9" y="1" width="1" height="1" fill="#000000"/><rect x="10" y="1" width="1" height="1" fill="#ffffff"/><rect x="11" y="1" width="1" height="1" fill="#000000"/><rect x="0" y="2" width="1" height="1" fill="#000000"/><rect x="1" y="2" width="2" height="1" fill="#808000"/><rect x="3" y="2" width="6" height="1" fill="#ffffff"/><rect x="9" y="2" width="1" height="1" fill="#000000"/><rect x="10" y="2" width="1" height="1" fill="#808000"/><rect x="11" y="2" width="1" height="1" fill="#000000"/><rect x="0" y="3" width="1" height="1" fill="#000000"/><rect x="1" y="3" width="2" height="1" fill="#808000"/><rect x="3" y="3" width="6" height="1" fill="#ffffff"/><rect x="9" y="3" width="1" height="1" fill="#000000"/><rect x="10" y="3" width="1" height="1" fill="#808000"/><rect x="11" y="3" width="1" height="1" fill="#000000"/><rect x="0" y="4" width="1" height="1" fill="#000000"/><rect x="1" y="4" width="2" height="1" fill="#808000"/><rect x="3" y="4" width="6" height="1" fill="#ffffff"/><rect x="9" y="4" width="1" height="1" fill="#000000"/><rect x="10" y="4" width="1" height="1" fill="#808000"/><rect x="11" y="4" width="1" height="1" fill="#000000"/><rect x="0" y="5" width="1" height="1" fill="#000000"/><rect x="1" y="5" width="2" height="1" fill="#808000"/><rect x="3" y="5" width="6" height="1" fill="#000000"/><rect x="9" y="5" width="2" height="1" fill="#808000"/><rect x="11" y="5" width="1" height="1" fill="#000000"/><rect x="0" y="6" width="1" height="1" fill="#000000"/><rect x="1" y="6" width="10" height="1" fill="#808000"/><rect x="11" y="6" width="1" height="1" fill="#000000"/><rect x="0" y="7" width="1" height="1" fill="#000000"/><rect x="1" y="7" width="2" height="1" fill="#808000"/><rect x="3" y="7" width="6" height="1" fill="#000000"/><rect x="9" y="7" width="2" height="1" fill="#808000"/><rect x="11" y="7" width="1" height="1" fill="#000000"/><rect x="0" y="8" width="1" height="1" fill="#000000"/><rect x="1" y="8" width="2" height="1" fill="#808000"/><rect x="3" y="8" width="3" height="1" fill="#000000"/><rect x="6" y="8" width="2" height="1" fill="#ffffff"/><rect x="8" y="8" width="1" height="1" fill="#000000"/><rect x="9" y="8" width="2" height="1" fill="#808000"/><rect x="11" y="8" width="1" height="1" fill="#000000"/><rect x="0" y="9" width="1" height="1" fill="#000000"/><rect x="1" y="9" width="2" height="1" fill="#808000"/><rect x="3" y="9" width="3" height="1" fill="#000000"/><rect x="6" y="9" width="2" height="1" fill="#ffffff"/><rect x="8" y="9" width="1" height="1" fill="#000000"/><rect x="9" y="9" width="2" height="1" fill="#808000"/><rect x="11" y="9" width="1" height="1" fill="#000000"/><rect x="0" y="10" width="12" height="1" fill="#000000"/></svg><svg style="left:135px;top:59px" width="12" height="11"><rect x="0" y="0" width="12" height="1" fill="#000000"/><rect x="0" y="1" width="1" height="1" fill="#000000"/><rect x="1" y="1" width="1" height="1" fill="#808000"/><rect x="2" y="1" width="1" height="1" fill="#000000"/><rect x="3" y="1" width="6" height="1" fill="#ffffff"/><rect x="9" y="1" width="1" height="1" fill="#000000"/><rect x="10" y="1" width="1" height="1" fill="#ffffff"/><rect x="11" y="1" width="1" height="1" fill="#000000"/><rect x="0" y="2" width="1" height="1" fill="#000000"/><rect x="1" y="2" width="2" height="1" fill="#808000"/><rect x="3" y="2" width="6" height="1" fill="#ffffff"/><rect x="9" y="2" width="1" height="1" fill="#000000"/><rect x="10" y="2" width="1" height="1" fill="#808000"/><rect x="11" y="2" width="1" height="1" fill="#000000"/><rect x="0" y="3" width="1" height="1" fill="#000000"/><rect x="1" y="3" width="2" height="1" fill="#808000"/><rect x="3" y="3" width="6" height="1" fill="#ffffff"/><rect x="9" y="3" width="1" height="1" fill="#000000"/><rect x="10" y="3" width="1" height="1" fill="#808000"/><rect x="11" y="3" width="1" height="1" fill="#000000"/><rect x="0" y="4" width="1" height="1" fill="#000000"/><rect x="1" y="4" width="2" height="1" fill="#808000"/><rect x="3" y="4" width="6" height="1" fill="#ffffff"/><rect x="9" y="4" width="1" height="1" fill="#000000"/><rect x="10" y="4" width="1" height="1" fill="#808000"/><rect x="11" y="4" width="1" height="1" fill="#000000"/><rect x="0" y="5" width="1" height="1" fill="#000000"/><rect x="1" y="5" width="2" height="1" fill="#808000"/><rect x="3" y="5" width="6" height="1" fill="#000000"/><rect x="9" y="5" width="2" height="1" fill="#808000"/><rect x="11" y="5" width="1" height="1" fill="#000000"/><rect x="0" y="6" width="1" height="1" fill="#000000"/><rect x="1" y="6" width="10" height="1" fill="#808000"/><rect x="11" y="6" width="1" height="1" fill="#000000"/><rect x="0" y="7" width="1" height="1" fill="#000000"/><rect x="1" y="7" width="2" height="1" fill="#808000"/><rect x="3" y="7" width="6" height="1" fill="#000000"/><rect x="9" y="7" width="2" height="1" fill="#808000"/><rect x="11" y="7" width="1" height="1" fill="#000000"/><rect x="0" y="8" width="1" height="1" fill="#000000"/><rect x="1" y="8" width="2" height="1" fill="#808000"/><rect x="3" y="8" width="3" height="1" fill="#000000"/><rect x="6" y="8" width="2" height="1" fill="#ffffff"/><rect x="8" y="8" width="1" height="1" fill="#000000"/><rect x="9" y="8" width="2" height="1" fill="#808000"/><rect x="11" y="8" width="1" height="1" fill="#000000"/><rect x="0" y="9" width="1" height="1" fill="#000000"/><rect x="1" y="9" width="2" height="1" fill="#808000"/><rect x="3" y="9" width="3" height="1" fill="#000000"/><rect x="6" y="9" width="2" height="1" fill="#ffffff"/><rect x="8" y="9" width="1" height="1" fill="#000000"/><rect x="9" y="9" width="2" height="1" fill="#808000"/><rect x="11" y="9" width="1" height="1" fill="#000000"/><rect x="0" y="10" width="12" height="1" fill="#000000"/></svg><svg style="left:164px;top:56px" width="16" height="14"><rect x="5" y="0" width="9" height="1" fill="#000000"/><rect x="4" y="1" width="1" height="1" fill="#000000"/><rect x="5" y="1" width="8" height="1" fill="#ffffff"/><rect x="13" y="1" width="1" height="1" fill="#000000"/><rect x="4" y="2" width="1" height="1" fill="#000000"/><rect x="5" y="2" width="1" height="1" fill="#ffffff"/><rect x="6" y="2" width="5" height="1" fill="#000000"/><rect x="11" y="2" width="2" height="1" fill="#ffffff"/><rect x="13" y="2" width="1" height="1" fill="#000000"/><rect x="3" y="3" width="1" height="1" fill="#000000"/><rect x="4" y="3" width="8" height="1" fill="#ffffff"/><rect x="12" y="3" width="2" height="1" fill="#000000"/><rect x="3" y="4" width="1" height="1" fill="#000000"/><rect x="4" y="4" width="1" height="1" fill="#ffffff"/><rect x="5" y="4" width="6" height="1" fill="#000000"/><rect x="11" y="4" width="1" height="1" fill="#ffffff"/><rect x="12" y="4" width="1" height="1" fill="#000000"/><rect x="14" y="4" width="1" height="1" fill="#000000"/><rect x="3" y="5" width="1" height="1" fill="#000000"/><rect x="4" y="5" width="8" height="1" fill="#ffffff"/><rect x="12" y="5" width="2" height="1" fill="#000000"/><rect x="15" y="5" width="1" height="1" fill="#000000"/><rect x="2" y="6" width="10" height="1" fill="#000000"/><rect x="12" y="6" width="1" height="1" fill="#ffffff"/><rect x="14" y="6" width="1" height="1" fill="#ffffff"/><rect x="15" y="6" width="1" height="1" fill="#000000"/><rect x="0" y="7" width="13" height="1" fill="#000000"/><rect x="13" y="7" width="1" height="1" fill="#ffffff"/><rect x="14" y="7" width="2" height="1" fill="#000000"/><rect x="0" y="8" width="1" height="1" fill="#000000"/><rect x="1" y="8" width="11" height="1" fill="#ffffff"/><rect x="12" y="8" width="2" height="1" fill="#000000"/><rect x="14" y="8" width="1" height="1" fill="#ffffff"/><rect x="15" y="8" width="1" height="1" fill="#000000"/><rect x="0" y="9" width="13" height="1" fill="#000000"/><rect x="13" y="9" width="1" height="1" fill="#ffffff"/><rect x="14" y="9" width="2" height="1" fill="#000000"/><rect x="0" y="10" width="1" height="1" fill="#000000"/><rect x="1" y="10" width="6" height="1" fill="#ffffff"/><rect x="7" y="10" width="4" height="1" fill="#d8d860"/><rect x="11" y="10" width="2" height="1" fill="#ffffff"/><rect x="13" y="10" width="1" height="1" fill="#000000"/><rect x="14" y="10" width="1" height="1" fill="#ffffff"/><rect x="15" y="10" width="1" height="1" fill="#000000"/><rect x="0" y="11" width="15" height="1" fill="#000000"/><rect x="1" y="12" width="1" height="1" fill="#000000"/><rect x="2" y="12" width="10" height="1" fill="#ffffff"/><rect x="12" y="12" width="1" height="1" fill="#000000"/><rect x="13" y="12" width="1" height="1" fill="#ffffff"/><rect x="14" y="12" width="1" height="1" fill="#000000"/><rect x="2" y="13" width="12" height="1" fill="#000000"/></svg><svg style="left:187px;top:55px" width="17" height="15"><rect x="0" y="0" width="10" height="1" fill="#000000"/><rect x="0" y="1" width="1" height="1" fill="#000000"/><rect x="1" y="1" width="7" height="1" fill="#ffffff"/><rect x="8" y="1" width="1" height="1" fill="#000000"/><rect x="9" y="1" width="1" height="1" fill="#ffffff"/><rect x="10" y="1" width="1" height="1" fill="#000000"/><rect x="0" y="2" width="1" height="1" fill="#000000"/><rect x="1" y="2" width="7" height="1" fill="#ffffff"/><rect x="8" y="2" width="1" height="1" fill="#000000"/><rect x="9" y="2" width="2" height="1" fill="#ffffff"/><rect x="11" y="2" width="1" height="1" fill="#000000"/><rect x="0" y="3" width="1" height="1" fill="#000000"/><rect x="1" y="3" width="7" height="1" fill="#ffffff"/><rect x="8" y="3" width="4" height="1" fill="#000000"/><rect x="0" y="4" width="1" height="1" fill="#000000"/><rect x="1" y="4" width="10" height="1" fill="#ffffff"/><rect x="11" y="4" width="1" height="1" fill="#000000"/><rect x="0" y="5" width="1" height="1" fill="#000000"/><rect x="1" y="5" width="7" height="1" fill="#ffffff"/><rect x="8" y="5" width="4" height="1" fill="#000000"/><rect x="0" y="6" width="1" height="1" fill="#000000"/><rect x="1" y="6" width="6" height="1" fill="#ffffff"/><rect x="7" y="6" width="1" height="1" fill="#000000"/><rect x="8" y="6" width="1" height="1" fill="#d0f8f8"/><rect x="9" y="6" width="2" height="1" fill="#70d8d8"/><rect x="11" y="6" width="1" height="1" fill="#ffffff"/><rect x="12" y="6" width="1" height="1" fill="#000000"/><rect x="0" y="7" width="1" height="1" fill="#000000"/><rect x="1" y="7" width="5" height="1" fill="#ffffff"/><rect x="6" y="7" width="1" height="1" fill="#000000"/><rect x="7" y="7" width="1" height="1" fill="#d0f8f8"/><rect x="8" y="7" width="1" height="1" fill="#ffffff"/><rect x="9" y="7" width="3" height="1" fill="#70d8d8"/><rect x="12" y="7" width="1" height="1" fill="#ffffff"/><rect x="13" y="7" width="1" height="1" fill="#000000"/><rect x="0" y="8" width="1" height="1" fill="#000000"/><rect x="1" y="8" width="5" height="1" fill="#ffffff"/><rect x="6" y="8" width="1" height="1" fill="#000000"/><rect x="7" y="8" width="5" height="1" fill="#70d8d8"/><rect x="12" y="8" width="1" height="1" fill="#ffffff"/><rect x="13" y="8" width="1" height="1" fill="#000000"/><rect x="0" y="9" width="1" height="1" fill="#000000"/><rect x="1" y="9" width="5" height="1" fill="#ffffff"/><rect x="6" y="9" width="1" height="1" fill="#000000"/><rect x="7" y="9" width="5" height="1" fill="#70d8d8"/><rect x="12" y="9" width="1" height="1" fill="#ffffff"/><rect x="13" y="9" width="1" height="1" fill="#000000"/><rect x="0" y="10" width="1" height="1" fill="#000000"/><rect x="1" y="10" width="5" height="1" fill="#ffffff"/><rect x="6" y="10" width="1" height="1" fill="#000000"/><rect x="7" y="10" width="5" height="1" fill="#70d8d8"/><rect x="12" y="10" width="1" height="1" fill="#ffffff"/><rect x="13" y="10" width="1" height="1" fill="#000000"/><rect x="0" y="11" width="1" height="1" fill="#000000"/><rect x="1" y="11" width="6" height="1" fill="#ffffff"/><rect x="7" y="11" width="1" height="1" fill="#000000"/><rect x="8" y="11" width="3" height="1" fill="#70d8d8"/><rect x="11" y="11" width="1" height="1" fill="#ffffff"/><rect x="12" y="11" width="1" height="1" fill="#000000"/><rect x="0" y="12" width="1" height="1" fill="#000000"/><rect x="1" y="12" width="7" height="1" fill="#ffffff"/><rect x="8" y="12" width="6" height="1" fill="#000000"/><rect x="0" y="13" width="1" height="1" fill="#000000"/><rect x="1" y="13" width="10" height="1" fill="#ffffff"/><rect x="11" y="13" width="1" height="1" fill="#000000"/><rect x="13" y="13" width="2" height="1" fill="#000000"/><rect x="0" y="14" width="12" height="1" fill="#000000"/><rect x="14" y="14" width="2" height="1" fill="#000000"/></svg><svg style="left:220px;top:56px" width="10" height="14"><rect x="2" y="0" width="1" height="1" fill="#000000"/><rect x="7" y="0" width="1" height="1" fill="#000000"/><rect x="2" y="1" width="1" height="1" fill="#000000"/><rect x="7" y="1" width="1" height="1" fill="#000000"/><rect x="2" y="2" width="1" height="1" fill="#000000"/><rect x="7" y="2" width="1" height="1" fill="#000000"/><rect x="2" y="3" width="2" height="1" fill="#000000"/><rect x="6" y="3" width="2" height="1" fill="#000000"/><rect x="3" y="4" width="1" height="1" fill="#000000"/><rect x="6" y="4" width="1" height="1" fill="#000000"/><rect x="3" y="5" width="4" height="1" fill="#000000"/><rect x="4" y="6" width="2" height="1" fill="#000000"/><rect x="4" y="7" width="2" height="1" fill="#000000"/><rect x="3" y="8" width="4" height="1" fill="#000080"/><rect x="1" y="9" width="3" height="1" fill="#000080"/><rect x="6" y="9" width="3" height="1" fill="#000080"/><rect x="0" y="10" width="1" height="1" fill="#000080"/><rect x="3" y="10" width="1" height="1" fill="#000080"/><rect x="6" y="10" width="1" height="1" fill="#000080"/><rect x="9" y="10" width="1" height="1" fill="#000080"/><rect x="0" y="11" width="1" height="1" fill="#000080"/><rect x="3" y="11" width="1" height="1" fill="#000080"/><rect x="6" y="11" width="1" height="1" fill="#000080"/><rect x="9" y="11" width="1" height="1" fill="#000080"/><rect x="0" y="12" width="1" height="1" fill="#000080"/><rect x="3" y="12" width="1" height="1" fill="#000080"/><rect x="6" y="12" width="1" height="1" fill="#000080"/><rect x="9" y="12" width="1" height="1" fill="#000080"/><rect x="1" y="13" width="2" height="1" fill="#000080"/><rect x="7" y="13" width="2" height="1" fill="#000080"/></svg><svg style="left:240px;top:56px" width="16" height="14"><rect x="0" y="0" width="7" height="1" fill="#000000"/><rect x="0" y="1" width="1" height="1" fill="#000000"/><rect x="1" y="1" width="5" height="1" fill="#ffffff"/><rect x="6" y="1" width="2" height="1" fill="#000000"/><rect x="0" y="2" width="1" height="1" fill="#000000"/><rect x="1" y="2" width="1" height="1" fill="#ffffff"/><rect x="2" y="2" width="3" height="1" fill="#000000"/><rect x="5" y="2" width="1" height="1" fill="#ffffff"/><rect x="6" y="2" width="1" height="1" fill="#000000"/><rect x="7" y="2" width="1" height="1" fill="#ffffff"/><rect x="8" y="2" width="1" height="1" fill="#000000"/><rect x="0" y="3" width="1" height="1" fill="#000000"/><rect x="1" y="3" width="5" height="1" fill="#ffffff"/><rect x="6" y="3" width="7" height="1" fill="#000080"/><rect x="0" y="4" width="1" height="1" fill="#000000"/><rect x="1" y="4" width="1" height="1" fill="#ffffff"/><rect x="2" y="4" width="3" height="1" fill="#000000"/><rect x="5" y="4" width="1" height="1" fill="#ffffff"/><rect x="6" y="4" width="1" height="1" fill="#000080"/><rect x="7" y="4" width="5" height="1" fill="#ffffff"/><rect x="12" y="4" width="2" height="1" fill="#000080"/><rect x="0" y="5" width="1" height="1" fill="#000000"/><rect x="1" y="5" width="5" height="1" fill="#ffffff"/><rect x="6" y="5" width="1" height="1" fill="#000080"/><rect x="7" y="5" width="1" height="1" fill="#ffffff"/><rect x="8" y="5" width="3" height="1" fill="#000000"/><rect x="11" y="5" width="1" height="1" fill="#ffffff"/><rect x="12" y="5" width="1" height="1" fill="#000080"/><rect x="13" y="5" width="1" height="1" fill="#ffffff"/><rect x="14" y="5" width="1" height="1" fill="#000080"/><rect x="0" y="6" width="1" height="1" fill="#000000"/><rect x="1" y="6" width="1" height="1" fill="#ffffff"/><rect x="2" y="6" width="3" height="1" fill="#000000"/><rect x="5" y="6" width="1" height="1" fill="#ffffff"/><rect x="6" y="6" width="1" height="1" fill="#000080"/><rect x="7" y="6" width="5" height="1" fill="#ffffff"/><rect x="12" y="6" width="4" height="1" fill="#000080"/><rect x="0" y="7" width="1" height="1" fill="#000000"/><rect x="1" y="7" width="5" height="1" fill="#ffffff"/><rect x="6" y="7" width="1" height="1" fill="#000080"/><rect x="7" y="7" width="1" height="1" fill="#ffffff"/><rect x="8" y="7" width="5" height="1" fill="#000000"/><rect x="13" y="7" width="2" height="1" fill="#ffffff"/><rect x="15" y="7" width="1" height="1" fill="#000080"/><rect x="0" y="8" width="6" height="1" fill="#000000"/><rect x="6" y="8" width="1" height="1" fill="#000080"/><rect x="7" y="8" width="8" height="1" fill="#ffffff"/><rect x="15" y="8" width="1" height="1" fill="#000080"/><rect x="6" y="9" width="1" height="1" fill="#000080"/><rect x="7" y="9" width="1" height="1" fill="#ffffff"/><rect x="8" y="9" width="6" height="1" fill="#000000"/><rect x="14" y="9" width="1" height="1" fill="#ffffff"/><rect x="15" y="9" width="1" height="1" fill="#000080"/><rect x="6" y="10" width="1" height="1" fill="#000080"/><rect x="7" y="10" width="8" height="1" fill="#ffffff"/><rect x="15" y="10" width="1" height="1" fill="#000080"/><rect x="6" y="11" width="1" height="1" fill="#000080"/><rect x="7" y="11" width="1" height="1" fill="#ffffff"/><rect x="8" y="11" width="6" height="1" fill="#000000"/><rect x="14" y="11" width="1" height="1" fill="#ffffff"/><rect x="15" y="11" width="1" height="1" fill="#000080"/><rect x="6" y="12" width="1" height="1" fill="#000080"/><rect x="7" y="12" width="8" height="1" fill="#ffffff"/><rect x="15" y="12" width="1" height="1" fill="#000080"/><rect x="6" y="13" width="10" height="1" fill="#000080"/></svg><svg style="left:263px;top:56px" width="15" height="14"><rect x="4" y="0" width="6" height="1" fill="#000000"/><rect x="1" y="1" width="4" height="1" fill="#000000"/><rect x="5" y="1" width="4" height="1" fill="#ffff99"/><rect x="9" y="1" width="4" height="1" fill="#000000"/><rect x="0" y="2" width="1" height="1" fill="#000000"/><rect x="1" y="2" width="1" height="1" fill="#808000"/><rect x="2" y="2" width="1" height="1" fill="#c8c090"/><rect x="3" y="2" width="1" height="1" fill="#000000"/><rect x="4" y="2" width="2" height="1" fill="#ffff99"/><rect x="6" y="2" width="2" height="1" fill="#000000"/><rect x="8" y="2" width="2" height="1" fill="#ffff99"/><rect x="10" y="2" width="1" height="1" fill="#000000"/><rect x="11" y="2" width="1" height="1" fill="#c8c090"/><rect x="12" y="2" width="1" height="1" fill="#808000"/><rect x="13" y="2" width="1" height="1" fill="#000000"/><rect x="0" y="3" width="1" height="1" fill="#000000"/><rect x="1" y="3" width="1" height="1" fill="#c8c090"/><rect x="2" y="3" width="1" height="1" fill="#808000"/><rect x="3" y="3" width="8" height="1" fill="#000000"/><rect x="11" y="3" width="1" height="1" fill="#808000"/><rect x="12" y="3" width="1" height="1" fill="#c8c090"/><rect x="13" y="3" width="1" height="1" fill="#000000"/><rect x="0" y="4" width="1" height="1" fill="#000000"/><rect x="1" y="4" width="1" height="1" fill="#808000"/><rect x="2" y="4" width="1" height="1" fill="#c8c090"/><rect x="3" y="4" width="1" height="1" fill="#808000"/><rect x="4" y="4" width="1" height="1" fill="#c8c090"/><rect x="5" y="4" width="1" height="1" fill="#808000"/><rect x="6" y="4" width="1" height="1" fill="#c8c090"/><rect x="7" y="4" width="1" height="1" fill="#808000"/><rect x="8" y="4" width="1" height="1" fill="#c8c090"/><rect x="9" y="4" width="1" height="1" fill="#808000"/><rect x="10" y="4" width="1" height="1" fill="#c8c090"/><rect x="11" y="4" width="1" height="1" fill="#808000"/><rect x="12" y="4" width="1" height="1" fill="#c8c090"/><rect x="13" y="4" width="1" height="1" fill="#000000"/><rect x="0" y="5" width="1" height="1" fill="#000000"/><rect x="1" y="5" width="1" height="1" fill="#c8c090"/><rect x="2" y="5" width="1" height="1" fill="#808000"/><rect x="3" y="5" width="1" height="1" fill="#c8c090"/><rect x="4" y="5" width="1" height="1" fill="#808000"/><rect x="5" y="5" width="1" height="1" fill="#c8c090"/><rect x="6" y="5" width="7" height="1" fill="#000080"/><rect x="0" y="6" width="1" height="1" fill="#000000"/><rect x="1" y="6" width="1" height="1" fill="#808000"/><rect x="2" y="6" width="1" height="1" fill="#c8c090"/><rect x="3" y="6" width="1" height="1" fill="#808000"/><rect x="4" y="6" width="1" height="1" fill="#c8c090"/><rect x="5" y="6" width="1" height="1" fill="#808000"/><rect x="6" y="6" width="1" height="1" fill="#000080"/><rect x="7" y="6" width="5" height="1" fill="#ffffff"/><rect x="12" y="6" width="2" height="1" fill="#000080"/><rect x="0" y="7" width="1" height="1" fill="#000000"/><rect x="1" y="7" width="1" height="1" fill="#c8c090"/><rect x="2" y="7" width="1" height="1" fill="#808000"/><rect x="3" y="7" width="1" height="1" fill="#c8c090"/><rect x="4" y="7" width="1" height="1" fill="#808000"/><rect x="5" y="7" width="1" height="1" fill="#c8c090"/><rect x="6" y="7" width="1" height="1" fill="#000080"/><rect x="7" y="7" width="1" height="1" fill="#ffffff"/><rect x="8" y="7" width="3" height="1" fill="#000080"/><rect x="11" y="7" width="1" height="1" fill="#ffffff"/><rect x="12" y="7" width="1" height="1" fill="#000080"/><rect x="13" y="7" width="1" height="1" fill="#ffffff"/><rect x="14" y="7" width="1" height="1" fill="#000080"/><rect x="0" y="8" width="1" height="1" fill="#000000"/><rect x="1" y="8" width="1" height="1" fill="#808000"/><rect x="2" y="8" width="1" height="1" fill="#c8c090"/><rect x="3" y="8" width="1" height="1" fill="#808000"/><rect x="4" y="8" width="1" height="1" fill="#c8c090"/><rect x="5" y="8" width="1" height="1" fill="#808000"/><rect x="6" y="8" width="1" height="1" fill="#000080"/><rect x="7" y="8" width="5" height="1" fill="#ffffff"/><rect x="12" y="8" width="3" height="1" fill="#000080"/><rect x="0" y="9" width="1" height="1" fill="#000000"/><rect x="1" y="9" width="1" height="1" fill="#c8c090"/><rect x="2" y="9" width="1" height="1" fill="#808000"/><rect x="3" y="9" width="1" height="1" fill="#c8c090"/><rect x="4" y="9" width="1" height="1" fill="#808000"/><rect x="5" y="9" width="1" height="1" fill="#c8c090"/><rect x="6" y="9" width="1" height="1" fill="#000080"/><rect x="7" y="9" width="1" height="1" fill="#ffffff"/><rect x="8" y="9" width="5" height="1" fill="#000080"/><rect x="13" y="9" width="1" height="1" fill="#ffffff"/><rect x="14" y="9" width="1" height="1" fill="#000080"/><rect x="0" y="10" width="1" height="1" fill="#000000"/><rect x="1" y="10" width="1" height="1" fill="#808000"/><rect x="2" y="10" width="1" height="1" fill="#c8c090"/><rect x="3" y="10" width="1" height="1" fill="#808000"/><rect x="4" y="10" width="1" height="1" fill="#c8c090"/><rect x="5" y="10" width="1" height="1" fill="#808000"/><rect x="6" y="10" width="1" height="1" fill="#000080"/><rect x="7" y="10" width="7" height="1" fill="#ffffff"/><rect x="14" y="10" width="1" height="1" fill="#000080"/><rect x="0" y="11" width="1" height="1" fill="#000000"/><rect x="1" y="11" width="1" height="1" fill="#c8c090"/><rect x="2" y="11" width="1" height="1" fill="#808000"/><rect x="3" y="11" width="1" height="1" fill="#c8c090"/><rect x="4" y="11" width="1" height="1" fill="#808000"/><rect x="5" y="11" width="1" height="1" fill="#c8c090"/><rect x="6" y="11" width="1" height="1" fill="#000080"/><rect x="7" y="11" width="7" height="1" fill="#ffffff"/><rect x="14" y="11" width="1" height="1" fill="#000080"/><rect x="0" y="12" width="6" height="1" fill="#000000"/><rect x="6" y="12" width="1" height="1" fill="#000080"/><rect x="7" y="12" width="7" height="1" fill="#ffffff"/><rect x="14" y="12" width="1" height="1" fill="#000080"/><rect x="6" y="13" width="9" height="1" fill="#000080"/></svg><svg style="left:291px;top:57px" width="15" height="12"><rect x="5" y="0" width="4" height="1" fill="#a8a498"/><rect x="1" y="1" width="1" height="1" fill="#a8a498"/><rect x="4" y="1" width="1" height="1" fill="#a8a498"/><rect x="9" y="1" width="1" height="1" fill="#a8a498"/><rect x="1" y="2" width="3" height="1" fill="#a8a498"/><rect x="10" y="2" width="1" height="1" fill="#a8a498"/><rect x="1" y="3" width="4" height="1" fill="#a8a498"/><rect x="11" y="3" width="1" height="1" fill="#a8a498"/><rect x="1" y="4" width="4" height="1" fill="#a8a498"/><rect x="5" y="4" width="1" height="1" fill="#ffffff"/><rect x="11" y="4" width="1" height="1" fill="#a8a498"/><rect x="12" y="4" width="1" height="1" fill="#ffffff"/><rect x="2" y="5" width="4" height="1" fill="#ffffff"/><rect x="11" y="5" width="1" height="1" fill="#a8a498"/><rect x="12" y="5" width="1" height="1" fill="#ffffff"/><rect x="10" y="6" width="2" height="1" fill="#a8a498"/><rect x="8" y="7" width="2" height="1" fill="#a8a498"/><rect x="10" y="7" width="1" height="1" fill="#ffffff"/><rect x="9" y="8" width="1" height="1" fill="#ffffff"/><rect x="9" y="9" width="1" height="1" fill="#ffffff"/><rect x="0" y="10" width="10" height="1" fill="#a8a498"/><rect x="11" y="10" width="1" height="1" fill="#a8a498"/><rect x="13" y="10" width="1" height="1" fill="#a8a498"/><rect x="0" y="11" width="10" height="1" fill="#ffffff"/><rect x="11" y="11" width="1" height="1" fill="#ffffff"/><rect x="13" y="11" width="1" height="1" fill="#ffffff"/></svg><svg style="left:314px;top:57px" width="15" height="12"><rect x="6" y="0" width="4" height="1" fill="#a8a498"/><rect x="5" y="1" width="1" height="1" fill="#a8a498"/><rect x="10" y="1" width="1" height="1" fill="#a8a498"/><rect x="13" y="1" width="1" height="1" fill="#a8a498"/><rect x="4" y="2" width="1" height="1" fill="#a8a498"/><rect x="11" y="2" width="3" height="1" fill="#a8a498"/><rect x="3" y="3" width="1" height="1" fill="#a8a498"/><rect x="10" y="3" width="4" height="1" fill="#a8a498"/><rect x="2" y="4" width="1" height="1" fill="#a8a498"/><rect x="10" y="4" width="4" height="1" fill="#a8a498"/><rect x="14" y="4" width="1" height="1" fill="#ffffff"/><rect x="2" y="5" width="1" height="1" fill="#a8a498"/><rect x="11" y="5" width="4" height="1" fill="#ffffff"/><rect x="3" y="6" width="1" height="1" fill="#a8a498"/><rect x="4" y="7" width="2" height="1" fill="#a8a498"/><rect x="5" y="8" width="1" height="1" fill="#ffffff"/><rect x="5" y="9" width="1" height="1" fill="#ffffff"/><rect x="1" y="10" width="1" height="1" fill="#a8a498"/><rect x="3" y="10" width="1" height="1" fill="#a8a498"/><rect x="5" y="10" width="10" height="1" fill="#a8a498"/><rect x="1" y="11" width="1" height="1" fill="#ffffff"/><rect x="3" y="11" width="1" height="1" fill="#ffffff"/><rect x="5" y="11" width="10" height="1" fill="#ffffff"/></svg><svg style="left:344px;top:57px" width="13" height="12"><rect x="0" y="0" width="12" height="1" fill="#000050"/><rect x="12" y="0" width="1" height="1" fill="#000000"/><rect x="0" y="1" width="12" height="1" fill="#000050"/><rect x="12" y="1" width="1" height="1" fill="#000000"/><rect x="0" y="2" width="3" height="1" fill="#b0aca0"/><rect x="3" y="2" width="7" height="1" fill="#88c8c0"/><rect x="10" y="2" width="2" height="1" fill="#b0aca0"/><rect x="12" y="2" width="1" height="1" fill="#000000"/><rect x="0" y="3" width="1" height="1" fill="#b0aca0"/><rect x="1" y="3" width="2" height="1" fill="#ffffff"/><rect x="3" y="3" width="1" height="1" fill="#88c8c0"/><rect x="4" y="3" width="2" height="1" fill="#40e0e0"/><rect x="6" y="3" width="1" height="1" fill="#88c8c0"/><rect x="7" y="3" width="2" height="1" fill="#40e0e0"/><rect x="9" y="3" width="1" height="1" fill="#88c8c0"/><rect x="10" y="3" width="2" height="1" fill="#ffffff"/><rect x="12" y="3" width="1" height="1" fill="#000000"/><rect x="0" y="4" width="1" height="1" fill="#b0aca0"/><rect x="1" y="4" width="2" height="1" fill="#ffffff"/><rect x="3" y="4" width="1" height="1" fill="#88c8c0"/><rect x="4" y="4" width="2" height="1" fill="#40e0e0"/><rect x="6" y="4" width="1" height="1" fill="#88c8c0"/><rect x="7" y="4" width="2" height="1" fill="#40e0e0"/><rect x="9" y="4" width="1" height="1" fill="#88c8c0"/><rect x="10" y="4" width="2" height="1" fill="#ffffff"/><rect x="12" y="4" width="1" height="1" fill="#000000"/><rect x="0" y="5" width="3" height="1" fill="#b0aca0"/><rect x="3" y="5" width="7" height="1" fill="#88c8c0"/><rect x="10" y="5" width="2" height="1" fill="#b0aca0"/><rect x="12" y="5" width="1" height="1" fill="#000000"/><rect x="0" y="6" width="1" height="1" fill="#b0aca0"/><rect x="1" y="6" width="2" height="1" fill="#ffffff"/><rect x="3" y="6" width="1" height="1" fill="#88c8c0"/><rect x="4" y="6" width="2" height="1" fill="#40e0e0"/><rect x="6" y="6" width="1" height="1" fill="#88c8c0"/><rect x="7" y="6" width="2" height="1" fill="#40e0e0"/><rect x="9" y="6" width="1" height="1" fill="#88c8c0"/><rect x="10" y="6" width="2" height="1" fill="#ffffff"/><rect x="12" y="6" width="1" height="1" fill="#000000"/><rect x="0" y="7" width="1" height="1" fill="#b0aca0"/><rect x="1" y="7" width="2" height="1" fill="#ffffff"/><rect x="3" y="7" width="1" height="1" fill="#88c8c0"/><rect x="4" y="7" width="2" height="1" fill="#40e0e0"/><rect x="6" y="7" width="1" height="1" fill="#88c8c0"/><rect x="7" y="7" width="2" height="1" fill="#40e0e0"/><rect x="9" y="7" width="1" height="1" fill="#88c8c0"/><rect x="10" y="7" width="2" height="1" fill="#ffffff"/><rect x="12" y="7" width="1" height="1" fill="#000000"/><rect x="0" y="8" width="3" height="1" fill="#b0aca0"/><rect x="3" y="8" width="7" height="1" fill="#88c8c0"/><rect x="10" y="8" width="2" height="1" fill="#b0aca0"/><rect x="12" y="8" width="1" height="1" fill="#000000"/><rect x="0" y="9" width="1" height="1" fill="#b0aca0"/><rect x="1" y="9" width="2" height="1" fill="#ffffff"/><rect x="3" y="9" width="1" height="1" fill="#b0aca0"/><rect x="4" y="9" width="2" height="1" fill="#ffffff"/><rect x="6" y="9" width="1" height="1" fill="#b0aca0"/><rect x="7" y="9" width="2" height="1" fill="#ffffff"/><rect x="9" y="9" width="1" height="1" fill="#b0aca0"/><rect x="10" y="9" width="2" height="1" fill="#ffffff"/><rect x="12" y="9" width="1" height="1" fill="#000000"/><rect x="0" y="10" width="1" height="1" fill="#b0aca0"/><rect x="1" y="10" width="2" height="1" fill="#ffffff"/><rect x="3" y="10" width="1" height="1" fill="#b0aca0"/><rect x="4" y="10" width="2" height="1" fill="#ffffff"/><rect x="6" y="10" width="1" height="1" fill="#b0aca0"/><rect x="7" y="10" width="2" height="1" fill="#ffffff"/><rect x="9" y="10" width="1" height="1" fill="#b0aca0"/><rect x="10" y="10" width="2" height="1" fill="#ffffff"/><rect x="12" y="10" width="1" height="1" fill="#000000"/><rect x="0" y="11" width="13" height="1" fill="#000000"/></svg><svg style="left:372px;top:56px" width="15" height="13"><rect x="3" y="0" width="3" height="1" fill="#000000"/><rect x="9" y="0" width="3" height="1" fill="#000000"/><rect x="3" y="1" width="1" height="1" fill="#000000"/><rect x="4" y="1" width="1" height="1" fill="#ffffff"/><rect x="5" y="1" width="1" height="1" fill="#000000"/><rect x="9" y="1" width="1" height="1" fill="#000000"/><rect x="10" y="1" width="1" height="1" fill="#ffffff"/><rect x="11" y="1" width="1" height="1" fill="#000000"/><rect x="2" y="2" width="5" height="1" fill="#000000"/><rect x="8" y="2" width="5" height="1" fill="#000000"/><rect x="2" y="3" width="1" height="1" fill="#000000"/><rect x="3" y="3" width="1" height="1" fill="#ffffff"/><rect x="4" y="3" width="3" height="1" fill="#000000"/><rect x="8" y="3" width="1" height="1" fill="#000000"/><rect x="9" y="3" width="1" height="1" fill="#ffffff"/><rect x="10" y="3" width="3" height="1" fill="#000000"/><rect x="1" y="4" width="2" height="1" fill="#000000"/><rect x="3" y="4" width="1" height="1" fill="#ffffff"/><rect x="4" y="4" width="5" height="1" fill="#000000"/><rect x="9" y="4" width="1" height="1" fill="#ffffff"/><rect x="10" y="4" width="4" height="1" fill="#000000"/><rect x="1" y="5" width="1" height="1" fill="#000000"/><rect x="2" y="5" width="1" height="1" fill="#ffffff"/><rect x="3" y="5" width="3" height="1" fill="#000000"/><rect x="6" y="5" width="1" height="1" fill="#ffffff"/><rect x="7" y="5" width="1" height="1" fill="#000000"/><rect x="8" y="5" width="1" height="1" fill="#ffffff"/><rect x="9" y="5" width="5" height="1" fill="#000000"/><rect x="0" y="6" width="2" height="1" fill="#000000"/><rect x="2" y="6" width="1" height="1" fill="#ffffff"/><rect x="3" y="6" width="3" height="1" fill="#000000"/><rect x="6" y="6" width="1" height="1" fill="#ffffff"/><rect x="7" y="6" width="1" height="1" fill="#000000"/><rect x="8" y="6" width="1" height="1" fill="#ffffff"/><rect x="9" y="6" width="6" height="1" fill="#000000"/><rect x="0" y="7" width="1" height="1" fill="#000000"/><rect x="1" y="7" width="1" height="1" fill="#ffffff"/><rect x="2" y="7" width="13" height="1" fill="#000000"/><rect x="0" y="8" width="1" height="1" fill="#000000"/><rect x="1" y="8" width="1" height="1" fill="#ffffff"/><rect x="2" y="8" width="5" height="1" fill="#000000"/><rect x="8" y="8" width="1" height="1" fill="#000000"/><rect x="9" y="8" width="1" height="1" fill="#ffffff"/><rect x="10" y="8" width="5" height="1" fill="#000000"/><rect x="0" y="9" width="1" height="1" fill="#000000"/><rect x="1" y="9" width="1" height="1" fill="#ffffff"/><rect x="2" y="9" width="5" height="1" fill="#000000"/><rect x="8" y="9" width="1" height="1" fill="#000000"/><rect x="9" y="9" width="1" height="1" fill="#ffffff"/><rect x="10" y="9" width="5" height="1" fill="#000000"/><rect x="0" y="10" width="1" height="1" fill="#000000"/><rect x="1" y="10" width="1" height="1" fill="#ffffff"/><rect x="2" y="10" width="5" height="1" fill="#000000"/><rect x="8" y="10" width="1" height="1" fill="#000000"/><rect x="9" y="10" width="1" height="1" fill="#ffffff"/><rect x="10" y="10" width="5" height="1" fill="#000000"/><rect x="0" y="11" width="7" height="1" fill="#000000"/><rect x="8" y="11" width="7" height="1" fill="#000000"/><rect x="1" y="12" width="5" height="1" fill="#000000"/><rect x="9" y="12" width="5" height="1" fill="#000000"/></svg><svg style="left:396px;top:56px" width="14" height="15"><rect x="2" y="0" width="3" height="1" fill="#000000"/><rect x="8" y="0" width="3" height="1" fill="#000000"/><rect x="2" y="1" width="1" height="1" fill="#000000"/><rect x="3" y="1" width="1" height="1" fill="#ffffff"/><rect x="4" y="1" width="1" height="1" fill="#000000"/><rect x="8" y="1" width="1" height="1" fill="#000000"/><rect x="9" y="1" width="1" height="1" fill="#ffffff"/><rect x="10" y="1" width="1" height="1" fill="#000000"/><rect x="1" y="2" width="11" height="1" fill="#000000"/><rect x="1" y="3" width="1" height="1" fill="#000000"/><rect x="2" y="3" width="1" height="1" fill="#ffffff"/><rect x="3" y="3" width="2" height="1" fill="#000000"/><rect x="5" y="3" width="1" height="1" fill="#ffffff"/><rect x="6" y="3" width="1" height="1" fill="#000000"/><rect x="7" y="3" width="1" height="1" fill="#ffffff"/><rect x="8" y="3" width="4" height="1" fill="#000000"/><rect x="0" y="4" width="1" height="1" fill="#000000"/><rect x="1" y="4" width="1" height="1" fill="#ffffff"/><rect x="2" y="4" width="6" height="1" fill="#000000"/><rect x="8" y="4" width="1" height="1" fill="#ffffff"/><rect x="9" y="4" width="4" height="1" fill="#000000"/><rect x="0" y="5" width="1" height="1" fill="#000000"/><rect x="1" y="5" width="1" height="1" fill="#ffffff"/><rect x="2" y="5" width="6" height="1" fill="#000000"/><rect x="8" y="5" width="1" height="1" fill="#ffffff"/><rect x="9" y="5" width="4" height="1" fill="#000000"/><rect x="0" y="6" width="1" height="1" fill="#000000"/><rect x="1" y="6" width="1" height="1" fill="#ffffff"/><rect x="2" y="6" width="4" height="1" fill="#000000"/><rect x="7" y="6" width="1" height="1" fill="#000000"/><rect x="8" y="6" width="1" height="1" fill="#ffffff"/><rect x="9" y="6" width="4" height="1" fill="#000000"/><rect x="0" y="7" width="6" height="1" fill="#000000"/><rect x="7" y="7" width="5" height="1" fill="#000000"/><rect x="12" y="7" width="1" height="1" fill="#d01010"/><rect x="1" y="8" width="4" height="1" fill="#000000"/><rect x="8" y="8" width="3" height="1" fill="#000000"/><rect x="11" y="8" width="1" height="1" fill="#d01010"/><rect x="10" y="9" width="1" height="1" fill="#d01010"/><rect x="1" y="10" width="3" height="1" fill="#1010c0"/><rect x="10" y="10" width="3" height="1" fill="#d01010"/><rect x="4" y="11" width="1" height="1" fill="#1010c0"/><rect x="7" y="11" width="1" height="1" fill="#1010c0"/><rect x="10" y="11" width="1" height="1" fill="#d01010"/><rect x="13" y="11" width="1" height="1" fill="#d01010"/><rect x="1" y="12" width="8" height="1" fill="#1010c0"/><rect x="10" y="12" width="1" height="1" fill="#d01010"/><rect x="13" y="12" width="1" height="1" fill="#d01010"/><rect x="0" y="13" width="1" height="1" fill="#1010c0"/><rect x="4" y="13" width="1" height="1" fill="#1010c0"/><rect x="7" y="13" width="1" height="1" fill="#1010c0"/><rect x="10" y="13" width="1" height="1" fill="#d01010"/><rect x="13" y="13" width="1" height="1" fill="#d01010"/><rect x="1" y="14" width="4" height="1" fill="#1010c0"/><rect x="10" y="14" width="3" height="1" fill="#d01010"/></svg><svg style="left:418px;top:55px" width="15" height="16"><rect x="5" y="0" width="5" height="1" fill="#a8a498"/><rect x="4" y="1" width="1" height="1" fill="#a8a498"/><rect x="10" y="1" width="1" height="1" fill="#a8a498"/><rect x="13" y="1" width="1" height="1" fill="#a8a498"/><rect x="4" y="2" width="1" height="1" fill="#a8a498"/><rect x="11" y="2" width="3" height="1" fill="#a8a498"/><rect x="4" y="3" width="1" height="1" fill="#a8a498"/><rect x="5" y="3" width="1" height="1" fill="#ffffff"/><rect x="10" y="3" width="4" height="1" fill="#a8a498"/><rect x="5" y="4" width="2" height="1" fill="#a8a498"/><rect x="10" y="4" width="4" height="1" fill="#a8a498"/><rect x="14" y="4" width="1" height="1" fill="#ffffff"/><rect x="6" y="5" width="2" height="1" fill="#a8a498"/><rect x="8" y="5" width="1" height="1" fill="#ffffff"/><rect x="11" y="5" width="4" height="1" fill="#ffffff"/><rect x="3" y="6" width="2" height="1" fill="#a8a498"/><rect x="8" y="6" width="2" height="1" fill="#a8a498"/><rect x="3" y="7" width="2" height="1" fill="#a8a498"/><rect x="5" y="7" width="1" height="1" fill="#ffffff"/><rect x="8" y="7" width="2" height="1" fill="#a8a498"/><rect x="10" y="7" width="1" height="1" fill="#ffffff"/><rect x="1" y="8" width="11" height="1" fill="#a8a498"/><rect x="1" y="9" width="1" height="1" fill="#a8a498"/><rect x="2" y="9" width="1" height="1" fill="#ffffff"/><rect x="3" y="9" width="5" height="1" fill="#a8a498"/><rect x="8" y="9" width="1" height="1" fill="#ffffff"/><rect x="9" y="9" width="3" height="1" fill="#a8a498"/><rect x="12" y="9" width="1" height="1" fill="#ffffff"/><rect x="1" y="10" width="1" height="1" fill="#a8a498"/><rect x="2" y="10" width="1" height="1" fill="#ffffff"/><rect x="3" y="10" width="5" height="1" fill="#a8a498"/><rect x="8" y="10" width="1" height="1" fill="#ffffff"/><rect x="9" y="10" width="3" height="1" fill="#a8a498"/><rect x="12" y="10" width="1" height="1" fill="#ffffff"/><rect x="1" y="11" width="5" height="1" fill="#a8a498"/><rect x="7" y="11" width="5" height="1" fill="#a8a498"/><rect x="12" y="11" width="1" height="1" fill="#ffffff"/><rect x="1" y="12" width="1" height="1" fill="#a8a498"/><rect x="2" y="12" width="1" height="1" fill="#ffffff"/><rect x="3" y="12" width="3" height="1" fill="#a8a498"/><rect x="6" y="12" width="1" height="1" fill="#ffffff"/><rect x="7" y="12" width="2" height="1" fill="#a8a498"/><rect x="9" y="12" width="1" height="1" fill="#ffffff"/><rect x="10" y="12" width="2" height="1" fill="#a8a498"/><rect x="12" y="12" width="1" height="1" fill="#ffffff"/><rect x="1" y="13" width="1" height="1" fill="#a8a498"/><rect x="2" y="13" width="1" height="1" fill="#ffffff"/><rect x="3" y="13" width="3" height="1" fill="#a8a498"/><rect x="6" y="13" width="1" height="1" fill="#ffffff"/><rect x="7" y="13" width="2" height="1" fill="#a8a498"/><rect x="9" y="13" width="1" height="1" fill="#ffffff"/><rect x="10" y="13" width="2" height="1" fill="#a8a498"/><rect x="12" y="13" width="1" height="1" fill="#ffffff"/><rect x="1" y="14" width="5" height="1" fill="#a8a498"/><rect x="6" y="14" width="1" height="1" fill="#ffffff"/><rect x="7" y="14" width="5" height="1" fill="#a8a498"/><rect x="12" y="14" width="1" height="1" fill="#ffffff"/><rect x="2" y="15" width="5" height="1" fill="#ffffff"/><rect x="8" y="15" width="5" height="1" fill="#ffffff"/></svg><svg style="left:444px;top:55px" width="15" height="16"><rect x="3" y="0" width="5" height="1" fill="#a8a498"/><rect x="2" y="1" width="1" height="1" fill="#a8a498"/><rect x="8" y="1" width="1" height="1" fill="#a8a498"/><rect x="0" y="2" width="2" height="1" fill="#a8a498"/><rect x="8" y="2" width="1" height="1" fill="#a8a498"/><rect x="0" y="3" width="3" height="1" fill="#a8a498"/><rect x="7" y="3" width="1" height="1" fill="#ffffff"/><rect x="8" y="3" width="1" height="1" fill="#a8a498"/><rect x="0" y="4" width="3" height="1" fill="#a8a498"/><rect x="6" y="4" width="2" height="1" fill="#a8a498"/><rect x="0" y="5" width="2" height="1" fill="#ffffff"/><rect x="4" y="5" width="1" height="1" fill="#ffffff"/><rect x="5" y="5" width="2" height="1" fill="#a8a498"/><rect x="3" y="6" width="2" height="1" fill="#a8a498"/><rect x="8" y="6" width="2" height="1" fill="#a8a498"/><rect x="3" y="7" width="2" height="1" fill="#a8a498"/><rect x="5" y="7" width="1" height="1" fill="#ffffff"/><rect x="8" y="7" width="2" height="1" fill="#a8a498"/><rect x="10" y="7" width="1" height="1" fill="#ffffff"/><rect x="1" y="8" width="11" height="1" fill="#a8a498"/><rect x="1" y="9" width="1" height="1" fill="#a8a498"/><rect x="2" y="9" width="1" height="1" fill="#ffffff"/><rect x="3" y="9" width="5" height="1" fill="#a8a498"/><rect x="8" y="9" width="1" height="1" fill="#ffffff"/><rect x="9" y="9" width="3" height="1" fill="#a8a498"/><rect x="12" y="9" width="1" height="1" fill="#ffffff"/><rect x="1" y="10" width="1" height="1" fill="#a8a498"/><rect x="2" y="10" width="1" height="1" fill="#ffffff"/><rect x="3" y="10" width="5" height="1" fill="#a8a498"/><rect x="8" y="10" width="1" height="1" fill="#ffffff"/><rect x="9" y="10" width="3" height="1" fill="#a8a498"/><rect x="12" y="10" width="1" height="1" fill="#ffffff"/><rect x="1" y="11" width="5" height="1" fill="#a8a498"/><rect x="7" y="11" width="5" height="1" fill="#a8a498"/><rect x="12" y="11" width="1" height="1" fill="#ffffff"/><rect x="1" y="12" width="1" height="1" fill="#a8a498"/><rect x="2" y="12" width="1" height="1" fill="#ffffff"/><rect x="3" y="12" width="3" height="1" fill="#a8a498"/><rect x="6" y="12" width="1" height="1" fill="#ffffff"/><rect x="7" y="12" width="2" height="1" fill="#a8a498"/><rect x="9" y="12" width="1" height="1" fill="#ffffff"/><rect x="10" y="12" width="2" height="1" fill="#a8a498"/><rect x="12" y="12" width="1" height="1" fill="#ffffff"/><rect x="1" y="13" width="1" height="1" fill="#a8a498"/><rect x="2" y="13" width="1" height="1" fill="#ffffff"/><rect x="3" y="13" width="3" height="1" fill="#a8a498"/><rect x="6" y="13" width="1" height="1" fill="#ffffff"/><rect x="7" y="13" width="2" height="1" fill="#a8a498"/><rect x="9" y="13" width="1" height="1" fill="#ffffff"/><rect x="10" y="13" width="2" height="1" fill="#a8a498"/><rect x="12" y="13" width="1" height="1" fill="#ffffff"/><rect x="1" y="14" width="5" height="1" fill="#a8a498"/><rect x="6" y="14" width="1" height="1" fill="#ffffff"/><rect x="7" y="14" width="5" height="1" fill="#a8a498"/><rect x="12" y="14" width="1" height="1" fill="#ffffff"/><rect x="2" y="15" width="5" height="1" fill="#ffffff"/><rect x="8" y="15" width="5" height="1" fill="#ffffff"/></svg><svg style="left:470px;top:56px" width="16" height="14"><rect x="0" y="0" width="15" height="1" fill="#000080"/><rect x="0" y="1" width="1" height="1" fill="#000080"/><rect x="1" y="1" width="1" height="1" fill="#ffffff"/><rect x="2" y="1" width="13" height="1" fill="#000080"/><rect x="0" y="2" width="1" height="1" fill="#000000"/><rect x="1" y="2" width="3" height="1" fill="#ffffff"/><rect x="4" y="2" width="1" height="1" fill="#000000"/><rect x="5" y="2" width="9" height="1" fill="#ffffff"/><rect x="14" y="2" width="1" height="1" fill="#000000"/><rect x="0" y="3" width="1" height="1" fill="#000000"/><rect x="1" y="3" width="3" height="1" fill="#ffffff"/><rect x="4" y="3" width="1" height="1" fill="#000000"/><rect x="5" y="3" width="9" height="1" fill="#ffffff"/><rect x="14" y="3" width="1" height="1" fill="#000000"/><rect x="0" y="4" width="1" height="1" fill="#000000"/><rect x="1" y="4" width="3" height="1" fill="#ffffff"/><rect x="4" y="4" width="1" height="1" fill="#000000"/><rect x="5" y="4" width="9" height="1" fill="#ffffff"/><rect x="14" y="4" width="1" height="1" fill="#000000"/><rect x="0" y="5" width="1" height="1" fill="#000000"/><rect x="1" y="5" width="3" height="1" fill="#ffffff"/><rect x="4" y="5" width="1" height="1" fill="#000000"/><rect x="5" y="5" width="1" height="1" fill="#ffffff"/><rect x="6" y="5" width="3" height="1" fill="#a09c80"/><rect x="9" y="5" width="5" height="1" fill="#ffffff"/><rect x="14" y="5" width="1" height="1" fill="#000000"/><rect x="0" y="6" width="1" height="1" fill="#000000"/><rect x="1" y="6" width="3" height="1" fill="#ffffff"/><rect x="4" y="6" width="1" height="1" fill="#000000"/><rect x="5" y="6" width="1" height="1" fill="#a09c80"/><rect x="6" y="6" width="3" height="1" fill="#f4f0a0"/><rect x="9" y="6" width="1" height="1" fill="#a09c80"/><rect x="10" y="6" width="4" height="1" fill="#ffffff"/><rect x="14" y="6" width="1" height="1" fill="#000000"/><rect x="0" y="7" width="1" height="1" fill="#000000"/><rect x="1" y="7" width="3" height="1" fill="#ffffff"/><rect x="4" y="7" width="1" height="1" fill="#000000"/><rect x="5" y="7" width="1" height="1" fill="#a09c80"/><rect x="6" y="7" width="4" height="1" fill="#f4f0a0"/><rect x="10" y="7" width="4" height="1" fill="#a09c80"/><rect x="14" y="7" width="1" height="1" fill="#000000"/><rect x="0" y="8" width="1" height="1" fill="#000000"/><rect x="1" y="8" width="3" height="1" fill="#ffffff"/><rect x="4" y="8" width="1" height="1" fill="#000000"/><rect x="5" y="8" width="1" height="1" fill="#a09c80"/><rect x="6" y="8" width="8" height="1" fill="#f4f0a0"/><rect x="14" y="8" width="1" height="1" fill="#a09c80"/><rect x="15" y="8" width="1" height="1" fill="#000000"/><rect x="0" y="9" width="1" height="1" fill="#000000"/><rect x="1" y="9" width="3" height="1" fill="#ffffff"/><rect x="4" y="9" width="1" height="1" fill="#000000"/><rect x="5" y="9" width="1" height="1" fill="#a09c80"/><rect x="6" y="9" width="8" height="1" fill="#f4f0a0"/><rect x="14" y="9" width="1" height="1" fill="#a09c80"/><rect x="15" y="9" width="1" height="1" fill="#000000"/><rect x="0" y="10" width="1" height="1" fill="#000000"/><rect x="1" y="10" width="3" height="1" fill="#ffffff"/><rect x="4" y="10" width="1" height="1" fill="#000000"/><rect x="5" y="10" width="1" height="1" fill="#a09c80"/><rect x="6" y="10" width="8" height="1" fill="#f4f0a0"/><rect x="14" y="10" width="1" height="1" fill="#a09c80"/><rect x="15" y="10" width="1" height="1" fill="#000000"/><rect x="0" y="11" width="5" height="1" fill="#000000"/><rect x="5" y="11" width="1" height="1" fill="#a09c80"/><rect x="6" y="11" width="8" height="1" fill="#f4f0a0"/><rect x="14" y="11" width="1" height="1" fill="#a09c80"/><rect x="15" y="11" width="1" height="1" fill="#000000"/><rect x="5" y="12" width="9" height="1" fill="#a09c80"/><rect x="14" y="12" width="2" height="1" fill="#000000"/><rect x="6" y="13" width="10" height="1" fill="#000000"/></svg><svg style="left:493px;top:55px" width="16" height="16"><rect x="0" y="0" width="16" height="1" fill="#000000"/><rect x="0" y="1" width="1" height="1" fill="#000000"/><rect x="1" y="1" width="14" height="1" fill="#000080"/><rect x="15" y="1" width="1" height="1" fill="#000000"/><rect x="0" y="2" width="1" height="1" fill="#000000"/><rect x="1" y="2" width="1" height="1" fill="#ffffff"/><rect x="2" y="2" width="13" height="1" fill="#000080"/><rect x="15" y="2" width="1" height="1" fill="#000000"/><rect x="0" y="3" width="7" height="1" fill="#000000"/><rect x="7" y="3" width="8" height="1" fill="#ffffff"/><rect x="15" y="3" width="1" height="1" fill="#000000"/><rect x="0" y="4" width="1" height="1" fill="#000000"/><rect x="1" y="4" width="4" height="1" fill="#ffffff"/><rect x="5" y="4" width="3" height="1" fill="#000000"/><rect x="8" y="4" width="1" height="1" fill="#ffffff"/><rect x="9" y="4" width="2" height="1" fill="#a0a0a0"/><rect x="11" y="4" width="1" height="1" fill="#ffffff"/><rect x="12" y="4" width="2" height="1" fill="#a0a0a0"/><rect x="14" y="4" width="1" height="1" fill="#ffffff"/><rect x="15" y="4" width="1" height="1" fill="#000000"/><rect x="0" y="5" width="1" height="1" fill="#000000"/><rect x="1" y="5" width="1" height="1" fill="#ffffff"/><rect x="2" y="5" width="3" height="1" fill="#000000"/><rect x="5" y="5" width="1" height="1" fill="#ffffff"/><rect x="6" y="5" width="4" height="1" fill="#000000"/><rect x="10" y="5" width="5" height="1" fill="#ffffff"/><rect x="15" y="5" width="1" height="1" fill="#000000"/><rect x="0" y="6" width="1" height="1" fill="#000000"/><rect x="1" y="6" width="4" height="1" fill="#ffffff"/><rect x="5" y="6" width="1" height="1" fill="#000000"/><rect x="6" y="6" width="4" height="1" fill="#ffffff"/><rect x="10" y="6" width="1" height="1" fill="#000000"/><rect x="11" y="6" width="1" height="1" fill="#ffffff"/><rect x="12" y="6" width="2" height="1" fill="#a0a0a0"/><rect x="14" y="6" width="1" height="1" fill="#ffffff"/><rect x="15" y="6" width="1" height="1" fill="#000000"/><rect x="0" y="7" width="1" height="1" fill="#000000"/><rect x="1" y="7" width="1" height="1" fill="#ffffff"/><rect x="2" y="7" width="4" height="1" fill="#000000"/><rect x="6" y="7" width="1" height="1" fill="#ffffff"/><rect x="7" y="7" width="5" height="1" fill="#000000"/><rect x="12" y="7" width="3" height="1" fill="#ffffff"/><rect x="15" y="7" width="1" height="1" fill="#000000"/><rect x="0" y="8" width="1" height="1" fill="#000000"/><rect x="1" y="8" width="4" height="1" fill="#ffffff"/><rect x="5" y="8" width="1" height="1" fill="#000000"/><rect x="6" y="8" width="4" height="1" fill="#ffffff"/><rect x="10" y="8" width="4" height="1" fill="#000000"/><rect x="14" y="8" width="1" height="1" fill="#ffffff"/><rect x="15" y="8" width="1" height="1" fill="#000000"/><rect x="0" y="9" width="1" height="1" fill="#000000"/><rect x="1" y="9" width="1" height="1" fill="#ffffff"/><rect x="2" y="9" width="4" height="1" fill="#000000"/><rect x="6" y="9" width="1" height="1" fill="#ffffff"/><rect x="7" y="9" width="3" height="1" fill="#000000"/><rect x="10" y="9" width="4" height="1" fill="#ffffff"/><rect x="14" y="9" width="2" height="1" fill="#000000"/><rect x="0" y="10" width="1" height="1" fill="#000000"/><rect x="1" y="10" width="4" height="1" fill="#ffffff"/><rect x="5" y="10" width="1" height="1" fill="#000000"/><rect x="6" y="10" width="3" height="1" fill="#ffffff"/><rect x="9" y="10" width="1" height="1" fill="#000000"/><rect x="10" y="10" width="1" height="1" fill="#ffffff"/><rect x="11" y="10" width="2" height="1" fill="#000080"/><rect x="13" y="10" width="1" height="1" fill="#ffffff"/><rect x="14" y="10" width="2" height="1" fill="#000000"/><rect x="0" y="11" width="1" height="1" fill="#000000"/><rect x="1" y="11" width="1" height="1" fill="#ffffff"/><rect x="2" y="11" width="4" height="1" fill="#000000"/><rect x="6" y="11" width="1" height="1" fill="#ffffff"/><rect x="7" y="11" width="3" height="1" fill="#000000"/><rect x="10" y="11" width="5" height="1" fill="#ffffff"/><rect x="15" y="11" width="1" height="1" fill="#000000"/><rect x="0" y="12" width="6" height="1" fill="#000000"/><rect x="6" y="12" width="3" height="1" fill="#ffffff"/><rect x="9" y="12" width="1" height="1" fill="#000000"/><rect x="10" y="12" width="1" height="1" fill="#ffffff"/><rect x="11" y="12" width="3" height="1" fill="#000080"/><rect x="14" y="12" width="1" height="1" fill="#ffffff"/><rect x="15" y="12" width="1" height="1" fill="#000000"/><rect x="5" y="13" width="5" height="1" fill="#000000"/><rect x="10" y="13" width="5" height="1" fill="#ffffff"/><rect x="15" y="13" width="1" height="1" fill="#000000"/><rect x="9" y="14" width="1" height="1" fill="#000000"/><rect x="10" y="14" width="1" height="1" fill="#ffffff"/><rect x="11" y="14" width="3" height="1" fill="#000080"/><rect x="14" y="14" width="1" height="1" fill="#ffffff"/><rect x="15" y="14" width="1" height="1" fill="#000000"/><rect x="9" y="15" width="7" height="1" fill="#000000"/></svg><div class="a" style="left:513px;top:52px;width:22px;height:22px;background:repeating-conic-gradient(#ece9d8 0 25%, #ffffff 0 50%) 0 0/2px 2px;border-top:1px solid #aca899;border-left:1px solid #aca899;border-right:1px solid #fff;border-bottom:1px solid #fff"></div><svg style="left:517px;top:56px" width="15" height="15"><rect x="1" y="0" width="14" height="1" fill="#000080"/><rect x="1" y="1" width="14" height="1" fill="#000080"/><rect x="1" y="2" width="1" height="1" fill="#000000"/><rect x="2" y="2" width="12" height="1" fill="#ffffff"/><rect x="14" y="2" width="1" height="1" fill="#000000"/><rect x="1" y="3" width="1" height="1" fill="#000000"/><rect x="2" y="3" width="1" height="1" fill="#ffffff"/><rect x="3" y="3" width="6" height="1" fill="#000000"/><rect x="9" y="3" width="5" height="1" fill="#ffffff"/><rect x="14" y="3" width="1" height="1" fill="#000000"/><rect x="1" y="4" width="1" height="1" fill="#000000"/><rect x="2" y="4" width="2" height="1" fill="#ffffff"/><rect x="4" y="4" width="1" height="1" fill="#000000"/><rect x="5" y="4" width="3" height="1" fill="#98a050"/><rect x="8" y="4" width="2" height="1" fill="#000000"/><rect x="10" y="4" width="4" height="1" fill="#ffffff"/><rect x="14" y="4" width="1" height="1" fill="#000000"/><rect x="1" y="5" width="1" height="1" fill="#000000"/><rect x="2" y="5" width="3" height="1" fill="#ffffff"/><rect x="5" y="5" width="1" height="1" fill="#000000"/><rect x="6" y="5" width="3" height="1" fill="#98a050"/><rect x="9" y="5" width="2" height="1" fill="#000000"/><rect x="11" y="5" width="3" height="1" fill="#ffffff"/><rect x="14" y="5" width="1" height="1" fill="#000000"/><rect x="1" y="6" width="1" height="1" fill="#000000"/><rect x="2" y="6" width="3" height="1" fill="#ffffff"/><rect x="5" y="6" width="1" height="1" fill="#000000"/><rect x="6" y="6" width="5" height="1" fill="#98a050"/><rect x="11" y="6" width="1" height="1" fill="#000000"/><rect x="12" y="6" width="2" height="1" fill="#ffffff"/><rect x="14" y="6" width="1" height="1" fill="#000000"/><rect x="1" y="7" width="1" height="1" fill="#000000"/><rect x="2" y="7" width="3" height="1" fill="#ffffff"/><rect x="5" y="7" width="1" height="1" fill="#7a2020"/><rect x="6" y="7" width="1" height="1" fill="#000000"/><rect x="7" y="7" width="5" height="1" fill="#98a050"/><rect x="12" y="7" width="1" height="1" fill="#000000"/><rect x="13" y="7" width="1" height="1" fill="#ffffff"/><rect x="14" y="7" width="1" height="1" fill="#000000"/><rect x="1" y="8" width="1" height="1" fill="#000000"/><rect x="2" y="8" width="2" height="1" fill="#ffffff"/><rect x="4" y="8" width="1" height="1" fill="#7a2020"/><rect x="5" y="8" width="1" height="1" fill="#000000"/><rect x="6" y="8" width="1" height="1" fill="#ffffff"/><rect x="7" y="8" width="2" height="1" fill="#000000"/><rect x="9" y="8" width="3" height="1" fill="#98a050"/><rect x="12" y="8" width="1" height="1" fill="#000000"/><rect x="13" y="8" width="1" height="1" fill="#ffffff"/><rect x="14" y="8" width="1" height="1" fill="#000000"/><rect x="1" y="9" width="1" height="1" fill="#000000"/><rect x="2" y="9" width="1" height="1" fill="#ffffff"/><rect x="3" y="9" width="1" height="1" fill="#7a2020"/><rect x="4" y="9" width="1" height="1" fill="#000000"/><rect x="5" y="9" width="4" height="1" fill="#ffffff"/><rect x="9" y="9" width="1" height="1" fill="#000000"/><rect x="10" y="9" width="2" height="1" fill="#98a050"/><rect x="12" y="9" width="1" height="1" fill="#000000"/><rect x="13" y="9" width="1" height="1" fill="#ffffff"/><rect x="14" y="9" width="1" height="1" fill="#000000"/><rect x="1" y="10" width="1" height="1" fill="#000000"/><rect x="2" y="10" width="1" height="1" fill="#7a2020"/><rect x="3" y="10" width="1" height="1" fill="#000000"/><rect x="4" y="10" width="6" height="1" fill="#ffffff"/><rect x="10" y="10" width="1" height="1" fill="#000000"/><rect x="11" y="10" width="1" height="1" fill="#98a050"/><rect x="12" y="10" width="2" height="1" fill="#ffffff"/><rect x="14" y="10" width="1" height="1" fill="#000000"/><rect x="1" y="11" width="1" height="1" fill="#7a2020"/><rect x="2" y="11" width="13" height="1" fill="#000000"/><rect x="0" y="12" width="1" height="1" fill="#7a2020"/><rect x="1" y="12" width="1" height="1" fill="#000000"/><rect x="0" y="13" width="1" height="1" fill="#000000"/><rect x="1" y="13" width="1" height="1" fill="#7a2020"/><rect x="0" y="14" width="1" height="1" fill="#000000"/></svg><svg style="left:546px;top:58px" width="14" height="11"><rect x="1" y="0" width="3" height="1" fill="#0a0a90"/><rect x="6" y="0" width="3" height="1" fill="#0a0a90"/><rect x="12" y="0" width="1" height="1" fill="#0a0a90"/><rect x="1" y="1" width="3" height="1" fill="#0a0a90"/><rect x="6" y="1" width="3" height="1" fill="#0a0a90"/><rect x="11" y="1" width="2" height="1" fill="#0a0a90"/><rect x="1" y="2" width="3" height="1" fill="#0a0a90"/><rect x="5" y="2" width="4" height="1" fill="#0a0a90"/><rect x="11" y="2" width="1" height="1" fill="#0a0a90"/><rect x="1" y="3" width="3" height="1" fill="#0a0a90"/><rect x="5" y="3" width="4" height="1" fill="#0a0a90"/><rect x="10" y="3" width="2" height="1" fill="#0a0a90"/><rect x="1" y="4" width="5" height="1" fill="#0a0a90"/><rect x="7" y="4" width="2" height="1" fill="#0a0a90"/><rect x="10" y="4" width="1" height="1" fill="#0a0a90"/><rect x="1" y="5" width="4" height="1" fill="#0a0a90"/><rect x="7" y="5" width="4" height="1" fill="#0a0a90"/><rect x="1" y="6" width="3" height="1" fill="#0a0a90"/><rect x="7" y="6" width="3" height="1" fill="#0a0a90"/><rect x="0" y="7" width="3" height="1" fill="#0a0a90"/><rect x="6" y="7" width="3" height="1" fill="#0a0a90"/><rect x="0" y="8" width="3" height="1" fill="#0a0a90"/><rect x="6" y="8" width="3" height="1" fill="#0a0a90"/><rect x="0" y="9" width="2" height="1" fill="#0a0a90"/><rect x="6" y="9" width="2" height="1" fill="#0a0a90"/><rect x="0" y="10" width="2" height="1" fill="#0a0a90"/><rect x="6" y="10" width="2" height="1" fill="#0a0a90"/></svg><svg style="left:569px;top:56px" width="15" height="14"><rect x="1" y="0" width="1" height="1" fill="#000000"/><rect x="4" y="0" width="2" height="1" fill="#000000"/><rect x="9" y="0" width="2" height="1" fill="#000000"/><rect x="0" y="1" width="1" height="1" fill="#000000"/><rect x="2" y="1" width="1" height="1" fill="#000000"/><rect x="4" y="1" width="1" height="1" fill="#000000"/><rect x="6" y="1" width="1" height="1" fill="#000000"/><rect x="8" y="1" width="1" height="1" fill="#000000"/><rect x="0" y="2" width="3" height="1" fill="#000000"/><rect x="4" y="2" width="2" height="1" fill="#000000"/><rect x="8" y="2" width="1" height="1" fill="#000000"/><rect x="14" y="2" width="1" height="1" fill="#0a0a80"/><rect x="0" y="3" width="1" height="1" fill="#000000"/><rect x="2" y="3" width="1" height="1" fill="#000000"/><rect x="4" y="3" width="1" height="1" fill="#000000"/><rect x="6" y="3" width="1" height="1" fill="#000000"/><rect x="8" y="3" width="1" height="1" fill="#000000"/><rect x="13" y="3" width="1" height="1" fill="#0a0a80"/><rect x="0" y="4" width="1" height="1" fill="#000000"/><rect x="2" y="4" width="1" height="1" fill="#000000"/><rect x="4" y="4" width="2" height="1" fill="#000000"/><rect x="9" y="4" width="2" height="1" fill="#000000"/><rect x="11" y="4" width="2" height="1" fill="#0a0a80"/><rect x="10" y="5" width="2" height="1" fill="#0a0a80"/><rect x="9" y="6" width="2" height="1" fill="#0a0a80"/><rect x="8" y="7" width="2" height="1" fill="#0a0a80"/><rect x="0" y="8" width="2" height="1" fill="#0a0a80"/><rect x="7" y="8" width="3" height="1" fill="#0a0a80"/><rect x="0" y="9" width="3" height="1" fill="#0a0a80"/><rect x="6" y="9" width="3" height="1" fill="#0a0a80"/><rect x="1" y="10" width="3" height="1" fill="#0a0a80"/><rect x="5" y="10" width="3" height="1" fill="#0a0a80"/><rect x="2" y="11" width="5" height="1" fill="#0a0a80"/><rect x="3" y="12" width="3" height="1" fill="#0a0a80"/><rect x="4" y="13" width="1" height="1" fill="#0a0a80"/></svg><svg style="left:592px;top:55px" width="14" height="16"><rect x="0" y="0" width="3" height="1" fill="#000000"/><rect x="1" y="1" width="2" height="1" fill="#000000"/><rect x="6" y="1" width="8" height="1" fill="#000070"/><rect x="1" y="2" width="2" height="1" fill="#000000"/><rect x="6" y="2" width="8" height="1" fill="#000070"/><rect x="1" y="3" width="2" height="1" fill="#000000"/><rect x="0" y="5" width="4" height="1" fill="#000000"/><rect x="3" y="6" width="1" height="1" fill="#000000"/><rect x="1" y="7" width="2" height="1" fill="#000000"/><rect x="6" y="7" width="8" height="1" fill="#000070"/><rect x="0" y="8" width="1" height="1" fill="#000000"/><rect x="6" y="8" width="8" height="1" fill="#000070"/><rect x="0" y="9" width="4" height="1" fill="#000000"/><rect x="0" y="11" width="3" height="1" fill="#000000"/><rect x="3" y="12" width="1" height="1" fill="#000000"/><rect x="1" y="13" width="2" height="1" fill="#000000"/><rect x="6" y="13" width="8" height="1" fill="#000070"/><rect x="3" y="14" width="1" height="1" fill="#000000"/><rect x="6" y="14" width="8" height="1" fill="#000070"/><rect x="0" y="15" width="3" height="1" fill="#000000"/></svg><svg style="left:624px;top:58px" width="10" height="10"><rect x="3" y="0" width="4" height="1" fill="#f00000"/><rect x="1" y="1" width="8" height="1" fill="#f00000"/><rect x="1" y="2" width="8" height="1" fill="#f00000"/><rect x="0" y="3" width="10" height="1" fill="#f00000"/><rect x="0" y="4" width="10" height="1" fill="#f00000"/><rect x="0" y="5" width="10" height="1" fill="#f00000"/><rect x="0" y="6" width="10" height="1" fill="#f00000"/><rect x="1" y="7" width="8" height="1" fill="#f00000"/><rect x="1" y="8" width="8" height="1" fill="#f00000"/><rect x="3" y="9" width="4" height="1" fill="#f00000"/></svg><div class="a" style="left:636px;top:30px;width:4px;height:596px;background:linear-gradient(90deg,#1a5ef8 0,#1a5ef8 2px,#0030b8 2px,#0030b8 4px);"></div><div class="a" style="left:567px;top:6px;width:21px;height:21px;background:linear-gradient(135deg,#5a92f8 0%,#3773ef 35%,#2660e0 70%,#1f55d8 100%);border:1px solid #fff;border-radius:3px;box-shadow:inset -1px -1px 1px #1a46b8, inset 1px 1px 1px #7aa8ff"></div><div class="a" style="left:590px;top:6px;width:21px;height:21px;background:linear-gradient(135deg,#5a92f8 0%,#3773ef 35%,#2660e0 70%,#1f55d8 100%);border:1px solid #fff;border-radius:3px;box-shadow:inset -1px -1px 1px #1a46b8, inset 1px 1px 1px #7aa8ff"></div><div class="a" style="left:613px;top:6px;width:21px;height:21px;background:linear-gradient(135deg,#f09070 0%,#e0603c 40%,#d14d28 75%,#c03e1c 100%);border:1px solid #fff;border-radius:3px;box-shadow:inset -1px -1px 1px #a03010, inset 1px 1px 1px #ffb090"></div><div class="a" style="left:572px;top:19px;width:8px;height:3px;background:#fff;"></div><div class="a" style="left:594px;top:11px;width:12px;height:11px;background:transparent;border:1px solid #fff;border-top:3px solid #fff"></div><svg style="left:617px;top:10px" width="13" height="13"><path d="M1.5 1.5L11.5 11.5M11.5 1.5L1.5 11.5" stroke="#fff" stroke-width="2.2" fill="none" style="shape-rendering:auto"/></svg><div class="a" style="left:618px;top:610px;width:1px;height:8px;background:#58a858;"></div><div class="a" style="left:618px;top:618px;width:1px;height:2px;background:#303060;"></div><div class="a" style="left:619px;top:610px;width:1px;height:1px;background:#58a858;"></div><div class="a" style="left:4px;top:30px;width:1px;height:73px;background:#f8f7f0;"></div><div class="a" style="left:4px;top:438px;width:1px;height:184px;background:#f8f7f0;"></div></body></html>
